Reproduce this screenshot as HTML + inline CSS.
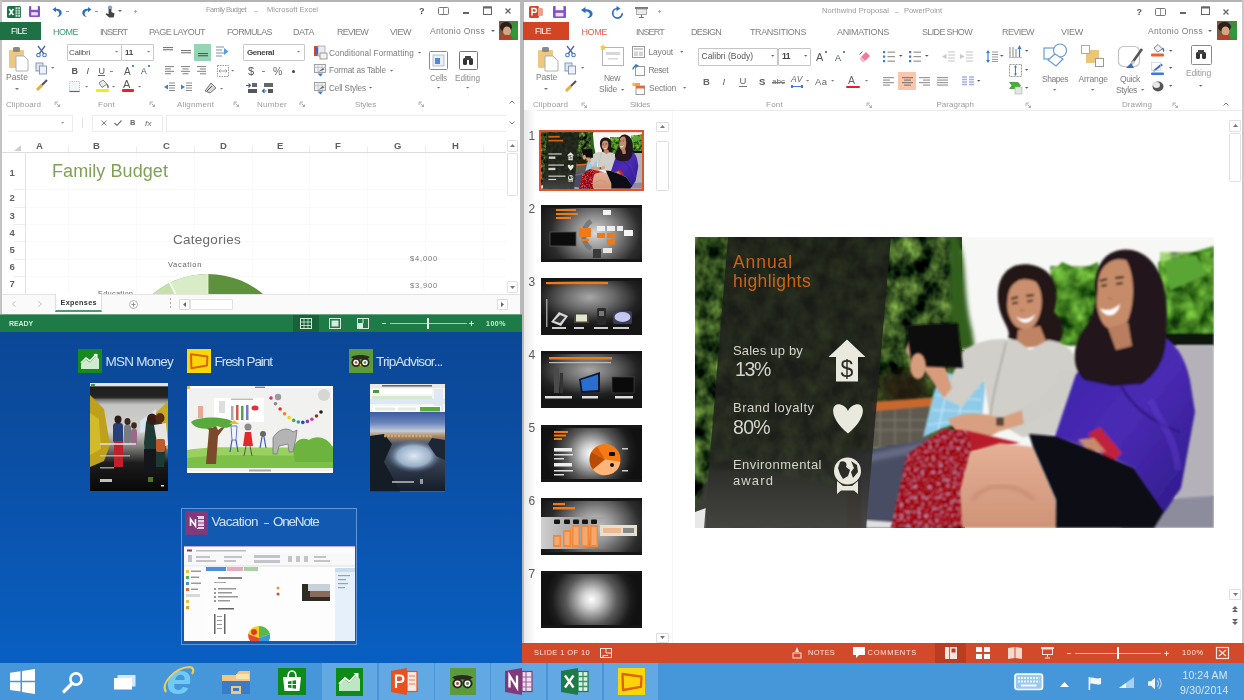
<!DOCTYPE html>
<html lang="en">
<head>
<meta charset="utf-8">
<title>Windows desktop - Excel and PowerPoint</title>
<style>
*{box-sizing:border-box;margin:0;padding:0}
html,body{width:1244px;height:700px;overflow:hidden}
body{position:relative;font-family:"Liberation Sans",sans-serif;font-size:8px;color:#555;
 background:linear-gradient(180deg,#0b4797 0%,#0b4797 48%,#0b4c9f 60%,#0a57b4 80%,#0862c6 100%)}
.a{position:absolute}
.t{position:absolute;white-space:nowrap;line-height:1.16;filter:blur(.45px)}
svg{overflow:visible}
</style>
</head>
<body>
<div id="stage" class="a" style="left:0;top:0;width:1244px;height:700px;overflow:hidden;filter:blur(.45px)">
<!-- EXCEL WINDOW -->
<div class="a" style="left:0;top:0;width:522px;height:332px;background:#fff"></div>
<div class="a" style="left:0px;top:0px;width:522px;height:2px;background:#b4b4b4;"></div>
<div class="a" style="left:0px;top:0px;width:2px;height:332px;background:#c4c4c4;"></div>
<div class="a" style="left:520px;top:0px;width:2px;height:332px;background:#b9b9b9;"></div>
<svg class="a" style="left:7px;top:6px;filter:blur(.4px)" width="14" height="12" viewBox="0 0 14 12"><rect x="0" y="0" width="14" height="12" rx="1.5" fill="#1e7145"/><rect x="8.5" y="1.2" width="4.6" height="9.6" fill="#cfe8d8"/><path d="M8.5 3.6H13M8.5 6H13M8.5 8.4H13M10.8 1.2V10.8" stroke="#1e7145" stroke-width=".7"/><path d="M2.2 3L6.4 9M6.4 3L2.2 9" stroke="#fff" stroke-width="1.5"/></svg>
<svg class="a" style="left:29px;top:6px;filter:blur(.4px)" width="11" height="11" viewBox="0 0 11 11"><rect width="11" height="11" rx="1" fill="#8452c6"/><rect x="2.2" y="0" width="6.6" height="3.8" fill="#fff"/><rect x="2.2" y="6.2" width="6.6" height="3.2" fill="#e9defa"/></svg>
<svg class="a" style="left:52px;top:7px;filter:blur(.4px)" width="11" height="10" viewBox="0 0 11 10"><path d="M0.5 2.5L4 0V1.8C8 1.6 10.5 4 9.5 7C8.8 9 7 9.8 5 9.8C7 8.6 7.8 7 7 5.4C6.3 4 5 3.6 4 3.6V5.2Z" fill="#2b6fc4"/></svg>
<div class="a" style="left:66px;top:11px;width:3px;height:1px;background:#999;"></div>
<svg class="a" style="left:81px;top:7px;filter:blur(.4px)" width="11" height="10" viewBox="0 0 11 10"><path d="M10.5 2.5L7 0V1.8C3 1.6 0.5 4 1.5 7C2.2 9 4 9.8 6 9.8C4 8.6 3.2 7 4 5.4C4.7 4 6 3.6 7 3.6V5.2Z" fill="#2b6fc4"/></svg>
<div class="a" style="left:95px;top:11px;width:3px;height:1px;background:#999;"></div>
<svg class="a" style="left:105px;top:5px;filter:blur(.4px)" width="10" height="13" viewBox="0 0 10 13"><circle cx="5" cy="2.6" r="2.2" fill="#8aa0c0"/><path d="M3.6 4V9L1.2 8.2L0.6 9.2L4.2 12.6H8.6L9.6 8.4L6.4 7V4Z" fill="#444"/></svg>
<svg class="a" style="left:118px;top:10px;filter:blur(.3px)" width="4" height="3" viewBox="0 0 4 3"><path d="M0 0H4L2 2Z" fill="#666"/></svg>
<div class="a" style="left:135px;top:10px;width:1px;height:3px;background:#aaa;"></div>
<div class="a" style="left:134px;top:11px;width:3px;height:1px;background:#aaa;"></div>
<span class="t" style="left:206px;top:6.1px;font-size:7.5px;color:#9a9a9a;letter-spacing:-0.61px;">Family Budget</span>
<span class="t" style="left:267px;top:6.1px;font-size:7.5px;color:#9a9a9a;letter-spacing:0.01px;">Microsoft Excel</span>
<div class="a" style="left:254px;top:11px;width:4px;height:1px;background:#c8c8c8;"></div>
<span class="t" style="left:419px;top:5.7px;font-size:9px;color:#555;letter-spacing:-0.50px;font-weight:700;">?</span>
<svg class="a" style="left:438px;top:7px;filter:blur(.3px)" width="11" height="8" viewBox="0 0 11 8"><rect x=".5" y=".5" width="10" height="7" rx="1" fill="none" stroke="#777" stroke-width="1"/><path d="M5.5 .5V7.5" stroke="#777" stroke-width=".8"/></svg>
<div class="a" style="left:463px;top:12px;width:6px;height:2px;background:#666;"></div>
<svg class="a" style="left:483px;top:6px;filter:blur(.3px)" width="9" height="9" viewBox="0 0 9 9"><rect x=".5" y="1" width="8" height="7.5" fill="none" stroke="#666" stroke-width="1"/><rect x=".5" y=".5" width="8" height="2" fill="#666"/></svg>
<svg class="a" style="left:505px;top:8px;filter:blur(.3px)" width="6" height="6" viewBox="0 0 6 6"><path d="M.5 .5L5.5 5.5M5.5 .5L.5 5.5" stroke="#666" stroke-width="1.3"/></svg>
<div class="a" style="left:0px;top:22px;width:41px;height:18px;background:#1e7145;"></div>
<span class="t" style="left:11px;top:27.1px;font-size:8.5px;color:#fff;letter-spacing:-0.49px;">FILE</span>
<span class="t" style="left:53px;top:26.7px;font-size:9px;color:#3d9a6e;letter-spacing:-0.50px;">HOME</span>
<span class="t" style="left:100px;top:26.7px;font-size:9px;color:#808080;letter-spacing:-0.97px;">INSERT</span>
<span class="t" style="left:149px;top:26.7px;font-size:9px;color:#808080;letter-spacing:-0.56px;">PAGE LAYOUT</span>
<span class="t" style="left:227px;top:26.7px;font-size:9px;color:#808080;letter-spacing:-0.63px;">FORMULAS</span>
<span class="t" style="left:293px;top:26.7px;font-size:9px;color:#808080;letter-spacing:-0.42px;">DATA</span>
<span class="t" style="left:337px;top:26.7px;font-size:9px;color:#808080;letter-spacing:-0.75px;">REVIEW</span>
<span class="t" style="left:390px;top:26.7px;font-size:9px;color:#808080;letter-spacing:-0.50px;">VIEW</span>
<span class="t" style="left:430px;top:27.1px;font-size:8.5px;color:#7c7c7c;letter-spacing:0.33px;">Antonio Onss</span>
<svg class="a" style="left:491px;top:30px;filter:blur(.3px)" width="4" height="3" viewBox="0 0 4 3"><path d="M0 0H4L2 2Z" fill="#666"/></svg>
<svg class="a" style="left:499px;top:21px;filter:blur(.6px)" width="19" height="19" viewBox="0 0 19 19"><rect width="19" height="19" fill="#3f8a3c"/><rect x="0" y="0" width="11" height="19" fill="#7a5a3a"/><ellipse cx="7" cy="6" rx="6" ry="5" fill="#2a2018"/><ellipse cx="8" cy="10" rx="4" ry="4.5" fill="#d8a486"/><path d="M0 19C1 14 5 13.5 8 14C12 14 13 16 14 19Z" fill="#b8402a"/><rect x="13" y="6" width="6" height="10" fill="#2f9a3a"/></svg>
<svg class="a" style="left:9px;top:47px;filter:blur(.45px)" width="19" height="24" viewBox="0 0 19 24"><rect x="0" y="3" width="15" height="18" rx="1" fill="#ecc880"/><rect x="4" y="0" width="7" height="5" rx="1.5" fill="#8a8a8a"/><path d="M7 9H15L19 13V24H7Z" fill="#fff" stroke="#a8a8a8" stroke-width=".9"/></svg>
<span class="t" style="left:6px;top:73.1px;font-size:8.5px;color:#787878;letter-spacing:0.05px;">Paste</span>
<svg class="a" style="left:14.5px;top:88px;filter:blur(.3px)" width="4" height="3" viewBox="0 0 4 3"><path d="M0 0H4L2 2Z" fill="#777"/></svg>
<svg class="a" style="left:36px;top:46px;filter:blur(.4px)" width="11" height="11" viewBox="0 0 11 11"><path d="M2 0L8 8M9 0L3 8" stroke="#4a6a9a" stroke-width="1.3"/><circle cx="2.5" cy="9" r="1.8" fill="none" stroke="#4a7ac0" stroke-width="1.1"/><circle cx="8.5" cy="9" r="1.8" fill="none" stroke="#4a7ac0" stroke-width="1.1"/></svg>
<svg class="a" style="left:36px;top:63px;filter:blur(.4px)" width="11" height="11" viewBox="0 0 11 11"><rect x="0" y="0" width="7" height="8" fill="#dfe6f0" stroke="#7c93b4" stroke-width=".9"/><rect x="3.5" y="3" width="7" height="8" fill="#eef2f8" stroke="#7c93b4" stroke-width=".9"/></svg>
<svg class="a" style="left:51.3px;top:67px;filter:blur(.3px)" width="3.4" height="2.7" viewBox="0 0 3.4 2.7"><path d="M0 0H3.4L1.7 1.7Z" fill="#777"/></svg>
<svg class="a" style="left:36px;top:80px;filter:blur(.4px)" width="12" height="11" viewBox="0 0 12 11"><path d="M1 10L6 5" stroke="#e2b23a" stroke-width="3"/><path d="M6 5L11 0" stroke="#555" stroke-width="2.2"/></svg>
<div class="a" style="left:67px;top:44px;width:55px;height:17px;background:#fff;border:1px solid #c9c9c9;border-radius:1px"></div>
<div class="a" style="left:121px;top:44px;width:33px;height:17px;background:#fff;border:1px solid #c9c9c9;border-radius:1px"></div>
<span class="t" style="left:69px;top:47.6px;font-size:8px;color:#555;letter-spacing:-0.24px;">Calibri</span>
<svg class="a" style="left:114.9px;top:51px;filter:blur(.3px)" width="3.2" height="2.6" viewBox="0 0 3.2 2.6"><path d="M0 0H3.2L1.6 1.6Z" fill="#777"/></svg>
<span class="t" style="left:125px;top:47.6px;font-size:8px;color:#444;letter-spacing:-0.23px;font-weight:700;">11</span>
<svg class="a" style="left:146.9px;top:51px;filter:blur(.3px)" width="3.2" height="2.6" viewBox="0 0 3.2 2.6"><path d="M0 0H3.2L1.6 1.6Z" fill="#777"/></svg>
<span class="t" style="left:71.5px;top:65.7px;font-size:9px;color:#555;letter-spacing:-1.00px;font-weight:700;">B</span>
<span class="t" style="left:86.5px;top:65.7px;font-size:9px;color:#555;letter-spacing:0.50px;font-style:italic;">I</span>
<span class="t" style="left:98.5px;top:65.7px;font-size:9px;color:#555;letter-spacing:0.00px;">U</span>
<div class="a" style="left:98px;top:75px;width:7px;height:1px;background:#666;"></div>
<div class="a" style="left:110px;top:71px;width:3px;height:1px;background:#888;"></div>
<span class="t" style="left:124px;top:65.8px;font-size:10px;color:#555;letter-spacing:1.33px;">A</span>
<div class="a" style="left:132px;top:65px;width:2px;height:2px;background:#4a8ad8;"></div>
<span class="t" style="left:141px;top:67.1px;font-size:8.5px;color:#555;letter-spacing:1.33px;">A</span>
<div class="a" style="left:148px;top:65px;width:2px;height:2px;background:#4a8ad8;"></div>
<svg class="a" style="left:69px;top:81px;filter:blur(.4px)" width="11" height="11" viewBox="0 0 11 11"><rect x=".5" y=".5" width="10" height="10" fill="#f4f6fa" stroke="#b9c2d0" stroke-width="1" stroke-dasharray="1.2 1"/><path d="M.5 10.5H10.5" stroke="#666" stroke-width="1.2"/></svg>
<svg class="a" style="left:84.9px;top:86px;filter:blur(.3px)" width="3.2" height="2.6" viewBox="0 0 3.2 2.6"><path d="M0 0H3.2L1.6 1.6Z" fill="#777"/></svg>
<svg class="a" style="left:96px;top:79px;filter:blur(.4px)" width="13" height="13" viewBox="0 0 13 13"><path d="M3 4L7 1L11 5L6 8.5Z" fill="#e8ecf2" stroke="#777" stroke-width=".9"/><path d="M11 5.5C12.5 7.5 12.5 8.5 11.5 9" stroke="#3a6ac0" stroke-width="1.3" fill="none"/><rect x="0" y="10" width="13" height="3" rx="1" fill="#f4ea1e"/></svg>
<svg class="a" style="left:111.9px;top:86px;filter:blur(.3px)" width="3.2" height="2.6" viewBox="0 0 3.2 2.6"><path d="M0 0H3.2L1.6 1.6Z" fill="#777"/></svg>
<span class="t" style="left:123px;top:77.8px;font-size:11px;color:#555;letter-spacing:2.66px;">A</span>
<div class="a" style="left:121.5px;top:89px;width:12px;height:3px;background:#e8202a;border-radius:1px;filter:blur(.4px)"></div>
<svg class="a" style="left:137.9px;top:86px;filter:blur(.3px)" width="3.2" height="2.6" viewBox="0 0 3.2 2.6"><path d="M0 0H3.2L1.6 1.6Z" fill="#777"/></svg>
<svg class="a" style="left:163px;top:47px;filter:blur(.35px)" width="12" height="10" viewBox="0 0 12 10"><rect x="0" y="0.0" width="10" height="1.1" fill="#777"/><rect x="0" y="2.2" width="10" height="1.1" fill="#777"/></svg>
<svg class="a" style="left:181px;top:50px;filter:blur(.35px)" width="12" height="10" viewBox="0 0 12 10"><rect x="0" y="0.0" width="10" height="1.1" fill="#777"/><rect x="0" y="2.2" width="10" height="1.1" fill="#777"/></svg>
<div class="a" style="left:194px;top:44px;width:17px;height:17px;background:#94d6b4;filter:blur(.3px)"></div>
<svg class="a" style="left:197.5px;top:53px;filter:blur(.35px)" width="12" height="10" viewBox="0 0 12 10"><rect x="0" y="0.0" width="10" height="1.1" fill="#555"/><rect x="0" y="2.2" width="10" height="1.1" fill="#555"/></svg>
<svg class="a" style="left:216px;top:46px;filter:blur(.4px)" width="13" height="11" viewBox="0 0 13 11"><path d="M0 1H8M0 4H6M0 7H8M0 10H6" stroke="#7a90b0" stroke-width="1"/><path d="M8 2L12.5 5.5L8 9Z" fill="#5a9ae0"/></svg>
<svg class="a" style="left:165px;top:66px;filter:blur(.35px)" width="12" height="10" viewBox="0 0 12 10"><rect x="0" y="0.0" width="9" height="1.1" fill="#8a8a8a"/><rect x="0" y="2.4" width="6" height="1.1" fill="#8a8a8a"/><rect x="0" y="4.8" width="9" height="1.1" fill="#8a8a8a"/><rect x="0" y="7.199999999999999" width="6" height="1.1" fill="#8a8a8a"/></svg>
<svg class="a" style="left:181px;top:66px;filter:blur(.35px)" width="12" height="10" viewBox="0 0 12 10"><rect x="0" y="0.0" width="9" height="1.1" fill="#8a8a8a"/><rect x="1.5" y="2.4" width="6" height="1.1" fill="#8a8a8a"/><rect x="0" y="4.8" width="9" height="1.1" fill="#8a8a8a"/><rect x="1.5" y="7.199999999999999" width="6" height="1.1" fill="#8a8a8a"/></svg>
<svg class="a" style="left:197px;top:66px;filter:blur(.35px)" width="12" height="10" viewBox="0 0 12 10"><rect x="0" y="0.0" width="9" height="1.1" fill="#8a8a8a"/><rect x="3" y="2.4" width="6" height="1.1" fill="#8a8a8a"/><rect x="0" y="4.8" width="9" height="1.1" fill="#8a8a8a"/><rect x="3" y="7.199999999999999" width="6" height="1.1" fill="#8a8a8a"/></svg>
<svg class="a" style="left:217px;top:65px;filter:blur(.4px)" width="12" height="12" viewBox="0 0 12 12"><rect x=".5" y=".5" width="11" height="11" fill="#fff" stroke="#999" stroke-width="1" stroke-dasharray="1.5 1"/><path d="M2 6H10M3.5 4.5L2 6L3.5 7.5M8.500 4.5L10 6L8.5 7.500" stroke="#888" stroke-width=".8" fill="none"/></svg>
<svg class="a" style="left:231.4px;top:70px;filter:blur(.3px)" width="3.2" height="2.6" viewBox="0 0 3.2 2.6"><path d="M0 0H3.2L1.6 1.6Z" fill="#777"/></svg>
<svg class="a" style="left:164px;top:83px;filter:blur(.4px)" width="12" height="10" viewBox="0 0 12 10"><path d="M5 0H11M5 2.5H11M5 5H11M5 7.5H11" stroke="#8a8a8a" stroke-width="1"/><path d="M4 1.500L0 4L4 6.500Z" fill="#3f7fd0"/></svg>
<svg class="a" style="left:181px;top:83px;filter:blur(.4px)" width="12" height="10" viewBox="0 0 12 10"><path d="M5 0H11M5 2.5H11M5 5H11M5 7.5H11" stroke="#8a8a8a" stroke-width="1"/><path d="M0 1.500L4 4L0 6.500Z" fill="#3f7fd0"/></svg>
<svg class="a" style="left:204px;top:82px;filter:blur(.45px)" width="13" height="12" viewBox="0 0 13 12"><path d="M1 9L7 1L12 6L6 11Z" fill="#d8d8d8" stroke="#777" stroke-width="1"/><path d="M3 9L8 4" stroke="#555" stroke-width="1"/></svg>
<svg class="a" style="left:219.9px;top:88px;filter:blur(.3px)" width="3.2" height="2.6" viewBox="0 0 3.2 2.6"><path d="M0 0H3.2L1.6 1.6Z" fill="#777"/></svg>
<div class="a" style="left:243px;top:44px;width:62px;height:17px;background:#fff;border:1px solid #c9c9c9;border-radius:1px"></div>
<span class="t" style="left:247px;top:47.6px;font-size:8px;color:#444;letter-spacing:-0.40px;font-weight:700;">General</span>
<svg class="a" style="left:296.9px;top:51px;filter:blur(.3px)" width="3.2" height="2.6" viewBox="0 0 3.2 2.6"><path d="M0 0H3.2L1.6 1.6Z" fill="#777"/></svg>
<span class="t" style="left:248px;top:64.8px;font-size:11px;color:#555;letter-spacing:0.88px;">$</span>
<div class="a" style="left:262px;top:71px;width:3px;height:1px;background:#888;"></div>
<span class="t" style="left:273px;top:65.3px;font-size:10.5px;color:#666;letter-spacing:0.66px;">%</span>
<div class="a" style="left:292px;top:70px;width:3px;height:3px;background:#444;border-radius:2px"></div>
<svg class="a" style="left:246px;top:83px;filter:blur(.5px)" width="12" height="11" viewBox="0 0 12 11"><path d="M0 2.500H4M2.500 .5L4.500 2.500L2.500 4.500" stroke="#2a5fc0" stroke-width="1.1" fill="none"/><rect x="6" y="0" width="5" height="4" fill="#666"/><rect x="2" y="6" width="9" height="4" fill="#555"/></svg>
<svg class="a" style="left:262px;top:83px;filter:blur(.5px)" width="12" height="11" viewBox="0 0 12 11"><rect x="2" y="0" width="9" height="4" fill="#666"/><path d="M4.500 8H0.500M2.500 6L0.500 8L2.500 10" stroke="#2a5fc0" stroke-width="1.1" fill="none"/><rect x="6" y="6" width="5" height="4" fill="#555"/></svg>
<svg class="a" style="left:314px;top:46px;filter:blur(.45px)" width="13" height="13" viewBox="0 0 13 13"><rect x="0" y="0" width="4" height="10" fill="#d8452a"/><rect x="4" y="0" width="7" height="10" fill="#e8ecf2" stroke="#9aa" stroke-width=".8"/><rect x="1" y="2" width="3" height="6" fill="#3a6ac8"/><rect x="6" y="7" width="7" height="6" fill="#f2f2f2" stroke="#888" stroke-width=".8"/></svg>
<svg class="a" style="left:314px;top:64px;filter:blur(.45px)" width="13" height="13" viewBox="0 0 13 13"><rect x=".5" y=".5" width="11" height="8" fill="#eef0f4" stroke="#999" stroke-width=".9"/><path d="M.5 3.500H11.500M4 .5V8.500M8 .5V8.500" stroke="#b8bcc4" stroke-width=".7"/><path d="M4 8L9 4L10.500 5.500Z" fill="#666"/><path d="M3.500 9.500L6.500 12.500L9 9.500Z" fill="#2f7ad8"/></svg>
<svg class="a" style="left:314px;top:82px;filter:blur(.45px)" width="13" height="13" viewBox="0 0 13 13"><rect x=".5" y=".5" width="11" height="8" fill="#eef0f4" stroke="#999" stroke-width=".9"/><path d="M.5 3.500H11.500M4 .5V8.500M8 .5V8.500" stroke="#b8bcc4" stroke-width=".7"/><path d="M4 8L9 4L10.500 5.500Z" fill="#666"/><path d="M3.500 9.500L6.500 12.500L9 9.500Z" fill="#2f7ad8"/></svg>
<span class="t" style="left:329px;top:49.4px;font-size:8.2px;color:#7c7c7c;letter-spacing:0.11px;">Conditional Formatting</span>
<svg class="a" style="left:417.9px;top:52px;filter:blur(.3px)" width="3.2" height="2.6" viewBox="0 0 3.2 2.6"><path d="M0 0H3.2L1.6 1.6Z" fill="#666"/></svg>
<span class="t" style="left:329px;top:66.4px;font-size:8.2px;color:#7c7c7c;letter-spacing:-0.11px;">Format as Table</span>
<svg class="a" style="left:389.9px;top:70px;filter:blur(.3px)" width="3.2" height="2.6" viewBox="0 0 3.2 2.6"><path d="M0 0H3.2L1.6 1.6Z" fill="#666"/></svg>
<span class="t" style="left:329px;top:84.4px;font-size:8.2px;color:#7c7c7c;letter-spacing:-0.16px;">Cell Styles</span>
<svg class="a" style="left:368.9px;top:87px;filter:blur(.3px)" width="3.2" height="2.6" viewBox="0 0 3.2 2.6"><path d="M0 0H3.2L1.6 1.6Z" fill="#666"/></svg>
<div class="a" style="left:429px;top:51px;width:19px;height:19px;background:#fff;border:1px solid #8a8a8a;border-radius:1.5px;filter:blur(.3px)"></div>
<svg class="a" style="left:433px;top:55px;filter:blur(.5px)" width="11" height="11" viewBox="0 0 11 11"><rect x="0" y="0" width="11" height="11" fill="#eaf0f8" stroke="#9ab" stroke-width=".7"/><rect x="2" y="3" width="5" height="6" fill="#4a8ad8"/></svg>
<div class="a" style="left:458.5px;top:51px;width:19.5px;height:19px;background:#fff;border:1px solid #777;border-radius:1.5px;filter:blur(.3px)"></div>
<svg class="a" style="left:463px;top:56px;filter:blur(.45px)" width="10" height="9" viewBox="0 0 10 9"><rect x="0" y="2" width="4" height="7" rx="1.5" fill="#333"/><rect x="6" y="2" width="4" height="7" rx="1.5" fill="#333"/><rect x="2" y="0" width="6" height="4" fill="#444"/></svg>
<span class="t" style="left:430px;top:74.4px;font-size:8.2px;color:#8a8a8a;letter-spacing:-0.25px;">Cells</span>
<svg class="a" style="left:436.9px;top:87px;filter:blur(.3px)" width="3.2" height="2.6" viewBox="0 0 3.2 2.6"><path d="M0 0H3.2L1.6 1.6Z" fill="#666"/></svg>
<span class="t" style="left:455px;top:74.4px;font-size:8.2px;color:#8a8a8a;letter-spacing:-0.01px;">Editing</span>
<svg class="a" style="left:465.9px;top:87px;filter:blur(.3px)" width="3.2" height="2.6" viewBox="0 0 3.2 2.6"><path d="M0 0H3.2L1.6 1.6Z" fill="#666"/></svg>
<span class="t" style="left:6px;top:99.6px;font-size:8px;color:#9c9c9c;letter-spacing:0.08px;">Clipboard</span>
<svg class="a" style="left:55px;top:102px;filter:blur(.3px)" width="5" height="5" viewBox="0 0 5 5"><path d="M0 0H3M0 0V3M1.5 1.5L4.5 4.5M4.5 2.5V4.5H2.5" stroke="#999" stroke-width=".8" fill="none"/></svg>
<span class="t" style="left:98px;top:99.6px;font-size:8px;color:#9c9c9c;letter-spacing:0.25px;">Font</span>
<svg class="a" style="left:150px;top:102px;filter:blur(.3px)" width="5" height="5" viewBox="0 0 5 5"><path d="M0 0H3M0 0V3M1.5 1.5L4.5 4.5M4.5 2.5V4.5H2.5" stroke="#999" stroke-width=".8" fill="none"/></svg>
<span class="t" style="left:177px;top:99.6px;font-size:8px;color:#9c9c9c;letter-spacing:0.16px;">Alignment</span>
<svg class="a" style="left:234px;top:102px;filter:blur(.3px)" width="5" height="5" viewBox="0 0 5 5"><path d="M0 0H3M0 0V3M1.5 1.5L4.5 4.5M4.5 2.5V4.5H2.5" stroke="#999" stroke-width=".8" fill="none"/></svg>
<span class="t" style="left:257px;top:99.6px;font-size:8px;color:#9c9c9c;letter-spacing:0.26px;">Number</span>
<svg class="a" style="left:300px;top:102px;filter:blur(.3px)" width="5" height="5" viewBox="0 0 5 5"><path d="M0 0H3M0 0V3M1.5 1.5L4.5 4.5M4.5 2.5V4.5H2.5" stroke="#999" stroke-width=".8" fill="none"/></svg>
<span class="t" style="left:355px;top:99.6px;font-size:8px;color:#9c9c9c;letter-spacing:-0.13px;">Styles</span>
<svg class="a" style="left:419px;top:102px;filter:blur(.3px)" width="5" height="5" viewBox="0 0 5 5"><path d="M0 0H3M0 0V3M1.5 1.5L4.5 4.5M4.5 2.5V4.5H2.5" stroke="#999" stroke-width=".8" fill="none"/></svg>
<svg class="a" style="left:509px;top:100px;filter:blur(.3px)" width="6" height="4" viewBox="0 0 6 4"><path d="M.5 3.500L3 1L5.500 3.500" stroke="#777" stroke-width="1" fill="none"/></svg>
<div class="a" style="left:8px;top:115px;width:65px;height:17px;background:#fff;border:1px solid #ececec;border-left:none"></div>
<div class="a" style="left:92px;top:115px;width:71px;height:17px;background:#fff;border:1px solid #ececec"></div>
<div class="a" style="left:166px;top:115px;width:340px;height:17px;background:#fff;border:1px solid #ececec;border-right:none"></div>
<svg class="a" style="left:60.9px;top:122px;filter:blur(.3px)" width="3.2" height="2.6" viewBox="0 0 3.2 2.6"><path d="M0 0H3.2L1.6 1.6Z" fill="#888"/></svg>
<div class="a" style="left:82px;top:118px;width:1px;height:10px;background:#e4e4e4;"></div>
<svg class="a" style="left:101px;top:120px;filter:blur(.3px)" width="6" height="6" viewBox="0 0 6 6"><path d="M.5 .5L5.500 5.500M5.500 .5L.5 5.500" stroke="#8a8a8a" stroke-width="1"/></svg>
<svg class="a" style="left:114px;top:120px;filter:blur(.3px)" width="8" height="6" viewBox="0 0 8 6"><path d="M.5 3L3 5.500L7.500 .5" stroke="#777" stroke-width="1.2" fill="none"/></svg>
<span class="t" style="left:130px;top:119.1px;font-size:7.5px;color:#666;letter-spacing:-0.42px;font-weight:700;">B</span>
<span class="t" style="left:145px;top:118.6px;font-size:8px;color:#666;letter-spacing:0.39px;font-style:italic;">fx</span>
<svg class="a" style="left:509px;top:121px;filter:blur(.3px)" width="6" height="4" viewBox="0 0 6 4"><path d="M.5 .5L3 3L5.500 .5" stroke="#888" stroke-width="1" fill="none"/></svg>
<div class="a" style="left:2px;top:152px;width:504px;height:1px;background:#dcdcdc;"></div>
<div class="a" style="left:25px;top:152px;width:1px;height:142px;background:#e2e2e2;"></div>
<svg class="a" style="left:14px;top:145px;filter:blur(.3px)" width="7" height="6" viewBox="0 0 7 6"><path d="M7 0V6H0Z" fill="#cfcfcf"/></svg>
<span class="t" style="left:36px;top:140.2px;font-size:9.5px;color:#606060;letter-spacing:-0.86px;font-weight:700;filter:blur(0.5px);">A</span>
<span class="t" style="left:93px;top:140.2px;font-size:9.5px;color:#606060;letter-spacing:-0.86px;font-weight:700;filter:blur(0.5px);">B</span>
<span class="t" style="left:163px;top:140.2px;font-size:9.5px;color:#606060;letter-spacing:-0.86px;font-weight:700;filter:blur(0.5px);">C</span>
<span class="t" style="left:220px;top:140.2px;font-size:9.5px;color:#606060;letter-spacing:-0.86px;font-weight:700;filter:blur(0.5px);">D</span>
<span class="t" style="left:277px;top:140.2px;font-size:9.5px;color:#606060;letter-spacing:-0.34px;font-weight:700;filter:blur(0.5px);">E</span>
<span class="t" style="left:335px;top:140.2px;font-size:9.5px;color:#606060;letter-spacing:0.20px;font-weight:700;filter:blur(0.5px);">F</span>
<span class="t" style="left:394px;top:140.2px;font-size:9.5px;color:#606060;letter-spacing:-1.39px;font-weight:700;filter:blur(0.5px);">G</span>
<span class="t" style="left:452px;top:140.2px;font-size:9.5px;color:#606060;letter-spacing:-0.86px;font-weight:700;filter:blur(0.5px);">H</span>
<span class="t" style="left:9.5px;top:167.2px;font-size:9.5px;color:#606060;letter-spacing:-0.28px;font-weight:700;filter:blur(0.5px);">1</span>
<span class="t" style="left:9.5px;top:192.2px;font-size:9.5px;color:#606060;letter-spacing:-0.28px;font-weight:700;filter:blur(0.5px);">2</span>
<span class="t" style="left:9.5px;top:210.2px;font-size:9.5px;color:#606060;letter-spacing:-0.28px;font-weight:700;filter:blur(0.5px);">3</span>
<span class="t" style="left:9.5px;top:227.2px;font-size:9.5px;color:#606060;letter-spacing:-0.28px;font-weight:700;filter:blur(0.5px);">4</span>
<span class="t" style="left:9.5px;top:244.2px;font-size:9.5px;color:#606060;letter-spacing:-0.28px;font-weight:700;filter:blur(0.5px);">5</span>
<span class="t" style="left:9.5px;top:261.2px;font-size:9.5px;color:#606060;letter-spacing:-0.28px;font-weight:700;filter:blur(0.5px);">6</span>
<span class="t" style="left:9.5px;top:278.2px;font-size:9.5px;color:#606060;letter-spacing:-0.28px;font-weight:700;filter:blur(0.5px);">7</span>
<div class="a" style="left:68px;top:146px;width:1px;height:6px;background:#ededed;"></div>
<div class="a" style="left:68px;top:153px;width:1px;height:140px;background:#f9f9f9;"></div>
<div class="a" style="left:136px;top:146px;width:1px;height:6px;background:#ededed;"></div>
<div class="a" style="left:136px;top:153px;width:1px;height:140px;background:#f9f9f9;"></div>
<div class="a" style="left:194px;top:146px;width:1px;height:6px;background:#ededed;"></div>
<div class="a" style="left:194px;top:153px;width:1px;height:140px;background:#f9f9f9;"></div>
<div class="a" style="left:252px;top:146px;width:1px;height:6px;background:#ededed;"></div>
<div class="a" style="left:252px;top:153px;width:1px;height:140px;background:#f9f9f9;"></div>
<div class="a" style="left:309px;top:146px;width:1px;height:6px;background:#ededed;"></div>
<div class="a" style="left:309px;top:153px;width:1px;height:140px;background:#f9f9f9;"></div>
<div class="a" style="left:367px;top:146px;width:1px;height:6px;background:#ededed;"></div>
<div class="a" style="left:367px;top:153px;width:1px;height:140px;background:#f9f9f9;"></div>
<div class="a" style="left:425px;top:146px;width:1px;height:6px;background:#ededed;"></div>
<div class="a" style="left:425px;top:153px;width:1px;height:140px;background:#f9f9f9;"></div>
<div class="a" style="left:483px;top:146px;width:1px;height:6px;background:#ededed;"></div>
<div class="a" style="left:483px;top:153px;width:1px;height:140px;background:#f9f9f9;"></div>
<div class="a" style="left:14px;top:189px;width:11px;height:1px;background:#ededed;"></div>
<div class="a" style="left:26px;top:189px;width:480px;height:1px;background:#f9f9f9;"></div>
<div class="a" style="left:14px;top:207px;width:11px;height:1px;background:#ededed;"></div>
<div class="a" style="left:26px;top:207px;width:480px;height:1px;background:#f9f9f9;"></div>
<div class="a" style="left:14px;top:224px;width:11px;height:1px;background:#ededed;"></div>
<div class="a" style="left:26px;top:224px;width:480px;height:1px;background:#f9f9f9;"></div>
<div class="a" style="left:14px;top:241px;width:11px;height:1px;background:#ededed;"></div>
<div class="a" style="left:26px;top:241px;width:480px;height:1px;background:#f9f9f9;"></div>
<div class="a" style="left:14px;top:259px;width:11px;height:1px;background:#ededed;"></div>
<div class="a" style="left:26px;top:259px;width:480px;height:1px;background:#f9f9f9;"></div>
<div class="a" style="left:14px;top:276px;width:11px;height:1px;background:#ededed;"></div>
<div class="a" style="left:26px;top:276px;width:480px;height:1px;background:#f9f9f9;"></div>
<span class="t" style="left:52px;top:161.3px;font-size:18px;color:#7ea155;letter-spacing:0.07px;filter:blur(0.55px);">Family Budget</span>
<span class="t" style="left:173px;top:231.5px;font-size:13.5px;color:#6a6a6a;letter-spacing:0.27px;filter:blur(0.5px);">Categories</span>
<span class="t" style="left:168px;top:261.1px;font-size:7.5px;color:#666;letter-spacing:0.67px;">Vacation</span>
<span class="t" style="left:410px;top:255.1px;font-size:7.5px;color:#777;letter-spacing:0.84px;">$4,000</span>
<span class="t" style="left:410px;top:282.1px;font-size:7.5px;color:#777;letter-spacing:0.84px;">$3,900</span>
<div class="a" style="left:26px;top:255px;width:480px;height:39px;overflow:hidden"><span class="t" style="left:72px;top:34.500px;font-size:7.500px;color:#666;letter-spacing:0.2px">Education</span><svg class="a" style="left:96px;top:18px;filter:blur(.5px)" width="180" height="180" viewBox="0 0 180 180"><circle cx="86" cy="87" r="86" fill="#5d913c"/><path d="M86 87V1A86 86 0 0 0 48 9.800Z" fill="#d9ecc8"/><path d="M86 87L48 9.800A86 86 0 0 0 0 87Z" fill="#c6e0ad"/><path d="M86 87L46.500 7" stroke="#fff" stroke-width="1.6"/><path d="M86 87V0" stroke="#eef6e6" stroke-width=".8"/></svg></div>
<div class="a" style="left:506px;top:138px;width:14px;height:156px;background:#fff;"></div>
<div class="a" style="left:507px;top:140px;width:11px;height:12px;background:#fff;border:1px solid #e2e2e2;border-radius:1px"></div>
<svg class="a" style="left:510px;top:144px;filter:blur(.3px)" width="5" height="3" viewBox="0 0 5 3"><path d="M0 3H5L2.500 0Z" fill="#777"/></svg>
<div class="a" style="left:507px;top:153px;width:11px;height:43px;background:#fff;border:1px solid #e2e2e2;border-radius:1px"></div>
<div class="a" style="left:507px;top:281px;width:11px;height:12px;background:#fff;border:1px solid #e2e2e2;border-radius:1px"></div>
<svg class="a" style="left:510px;top:286px;filter:blur(.3px)" width="5" height="3" viewBox="0 0 5 3"><path d="M0 0H5L2.500 3Z" fill="#777"/></svg>
<div class="a" style="left:2px;top:294px;width:518px;height:21px;background:#fafafa;"></div>
<div class="a" style="left:2px;top:294px;width:518px;height:1px;background:#e4e4e4;"></div>
<svg class="a" style="left:12px;top:301px;" width="4" height="6" viewBox="0 0 4 6"><path d="M3.500 .5L.5 3L3.500 5.500" stroke="#c4c4c4" stroke-width="1" fill="none"/></svg>
<svg class="a" style="left:38px;top:301px;" width="4" height="6" viewBox="0 0 4 6"><path d="M.5 .5L3.500 3L.5 5.500" stroke="#c4c4c4" stroke-width="1" fill="none"/></svg>
<div class="a" style="left:55px;top:294px;width:47px;height:18px;background:#fff;border-bottom:2px solid #4e9a72;border-left:1px solid #e0e0e0;border-right:1px solid #e0e0e0"></div>
<span class="t" style="left:60.5px;top:299.3px;font-size:7.2px;color:#333;letter-spacing:0.36px;font-weight:700;">Expenses</span>
<svg class="a" style="left:128.5px;top:299.5px;filter:blur(.3px)" width="9" height="9" viewBox="0 0 9 9"><circle cx="4.500" cy="4.500" r="4" fill="#fff" stroke="#aaa" stroke-width=".9"/><path d="M2.500 4.500H6.500M4.500 2.500V6.500" stroke="#888" stroke-width=".9"/></svg>
<div class="a" style="left:170px;top:298px;width:1px;height:2px;background:#aaa;"></div>
<div class="a" style="left:170px;top:302px;width:1px;height:2px;background:#aaa;"></div>
<div class="a" style="left:170px;top:306px;width:1px;height:2px;background:#aaa;"></div>
<div class="a" style="left:179px;top:299px;width:11px;height:11px;background:#fff;border:1px solid #dcdcdc;border-radius:1px"></div>
<svg class="a" style="left:183px;top:302px;" width="3" height="5" viewBox="0 0 3 5"><path d="M3 0V5L0 2.500Z" fill="#666"/></svg>
<div class="a" style="left:190px;top:299px;width:43px;height:11px;background:#fff;border:1px solid #e2e2e2;border-radius:1px"></div>
<div class="a" style="left:497px;top:299px;width:11px;height:11px;background:#fff;border:1px solid #dcdcdc;border-radius:1px"></div>
<svg class="a" style="left:501px;top:302px;" width="3" height="5" viewBox="0 0 3 5"><path d="M0 0V5L3 2.500Z" fill="#666"/></svg>
<div class="a" style="left:0px;top:315px;width:522px;height:17px;background:#1e7a46;"></div>
<div class="a" style="left:0px;top:314px;width:522px;height:1px;background:#6aa684;"></div>
<span class="t" style="left:9px;top:319.5px;font-size:7px;color:#cfe8da;letter-spacing:-0.10px;font-weight:700;">READY</span>
<div class="a" style="left:293px;top:315px;width:26px;height:17px;background:#176238;"></div>
<svg class="a" style="left:300px;top:318px;filter:blur(.35px)" width="12" height="11" viewBox="0 0 12 11"><rect x=".5" y=".5" width="11" height="10" fill="none" stroke="#d6eadf" stroke-width="1"/><path d="M.5 4H11.500M.5 7.500H11.500M4 .5V10.500M8 .5V10.500" stroke="#d6eadf" stroke-width=".8"/></svg>
<svg class="a" style="left:329px;top:318px;filter:blur(.35px)" width="12" height="11" viewBox="0 0 12 11"><rect x=".5" y=".5" width="11" height="10" fill="none" stroke="#d6eadf" stroke-width="1"/><rect x="2.500" y="2.500" width="7" height="6" fill="#d6eadf"/></svg>
<svg class="a" style="left:357px;top:318px;filter:blur(.35px)" width="12" height="11" viewBox="0 0 12 11"><rect x=".5" y=".5" width="11" height="10" fill="none" stroke="#d6eadf" stroke-width="1"/><path d="M.5 5.500H6V.5" stroke="#d6eadf" stroke-width="1" fill="none"/><rect x="1" y="6" width="5" height="4" fill="#d6eadf"/></svg>
<div class="a" style="left:382px;top:323px;width:4px;height:1px;background:#d6eadf;"></div>
<div class="a" style="left:390px;top:323px;width:77px;height:1px;background:#a9cdb9;"></div>
<div class="a" style="left:427px;top:318px;width:2px;height:11px;background:#e6f2ec;"></div>
<div class="a" style="left:469px;top:323px;width:5px;height:1px;background:#d6eadf;"></div>
<div class="a" style="left:471px;top:321px;width:1px;height:5px;background:#d6eadf;"></div>
<span class="t" style="left:486px;top:319.5px;font-size:7px;color:#cfe8da;letter-spacing:0.52px;font-weight:700;">100%</span>
<!-- POWERPOINT WINDOW -->
<div class="a" style="left:522px;top:0;width:722px;height:663px;background:#fff"></div>
<div class="a" style="left:522px;top:0px;width:722px;height:2px;background:#b4b4b4;"></div>
<div class="a" style="left:522px;top:0px;width:2px;height:663px;background:#b8b8b8;"></div>
<div class="a" style="left:1242px;top:0px;width:2px;height:663px;background:#c9c9c9;"></div>
<svg class="a" style="left:529px;top:6px;filter:blur(.45px)" width="14" height="12" viewBox="0 0 14 12"><rect x="0" y="0" width="10" height="12" rx="1.5" fill="#d24726"/><path d="M9 2H12.500A1.500 1.500 0 0 1 14 3.500V8.500A1.500 1.500 0 0 1 12.500 10H9Z" fill="#f0a08a"/><path d="M3 9.500V2.500H5.500C8 2.500 8 6.300 5.500 6.300H3" stroke="#fff" stroke-width="1.400" fill="none"/></svg>
<svg class="a" style="left:553px;top:6px;filter:blur(.45px)" width="13" height="12" viewBox="0 0 13 12"><rect width="13" height="12" rx="1" fill="#8452c6"/><rect x="2.600" y="0" width="7.800" height="4.200" fill="#fff"/><rect x="2.600" y="6.800" width="7.800" height="3.600" fill="#e9defa"/></svg>
<svg class="a" style="left:581px;top:7px;filter:blur(.45px)" width="13" height="11" viewBox="0 0 13 11"><path d="M0 3L4.500 0V2.200C9.500 2 12.500 5 11.300 8.200C10.500 10.200 8.500 11 6 11C8.500 9.600 9.300 7.800 8.500 6.200C7.700 4.800 6 4.400 4.500 4.400V6.200Z" fill="#2b6fc4"/></svg>
<svg class="a" style="left:611px;top:6px;filter:blur(.45px)" width="13" height="13" viewBox="0 0 13 13"><path d="M6.500 2.500A4.800 4.800 0 1 0 11.300 7.300" stroke="#2b6fc4" stroke-width="1.700" fill="none"/><path d="M5.500 0L9.500 2.500L5.500 5.200Z" fill="#2b6fc4"/></svg>
<svg class="a" style="left:635px;top:7px;filter:blur(.45px)" width="13" height="11" viewBox="0 0 13 11"><rect x="0" y="0" width="13" height="2" fill="#777"/><rect x="1.500" y="2" width="10" height="5.500" fill="#e8ece8" stroke="#999" stroke-width=".8"/><path d="M6.500 7.500V10M4 10.500H9" stroke="#777" stroke-width="1"/></svg>
<div class="a" style="left:659px;top:10px;width:1px;height:3px;background:#aaa;"></div>
<div class="a" style="left:658px;top:11px;width:3px;height:1px;background:#aaa;"></div>
<span class="t" style="left:822px;top:7.1px;font-size:7.5px;color:#9a9a9a;letter-spacing:0.09px;">Northwind Proposal</span>
<div class="a" style="left:895px;top:11.5px;width:4px;height:1px;background:#c8c8c8;"></div>
<span class="t" style="left:904px;top:7.1px;font-size:7.5px;color:#9a9a9a;letter-spacing:-0.04px;">PowerPoint</span>
<span class="t" style="left:1136.5px;top:6.7px;font-size:9px;color:#555;letter-spacing:-0.50px;font-weight:700;">?</span>
<svg class="a" style="left:1155px;top:8px;filter:blur(.3px)" width="11" height="8" viewBox="0 0 11 8"><rect x=".5" y=".5" width="10" height="7" rx="1" fill="none" stroke="#777" stroke-width="1"/><path d="M5.500 .5V7.500" stroke="#777" stroke-width=".8"/></svg>
<div class="a" style="left:1180px;top:12px;width:6px;height:2px;background:#666;"></div>
<svg class="a" style="left:1201px;top:6px;filter:blur(.3px)" width="9" height="9" viewBox="0 0 9 9"><rect x=".5" y="1" width="8" height="7.500" fill="none" stroke="#666" stroke-width="1"/><rect x=".5" y=".5" width="8" height="2" fill="#666"/></svg>
<svg class="a" style="left:1223px;top:8.5px;filter:blur(.3px)" width="6" height="6" viewBox="0 0 6 6"><path d="M.5 .5L5.500 5.500M5.500 .5L.5 5.500" stroke="#666" stroke-width="1.300"/></svg>
<div class="a" style="left:523px;top:22px;width:46px;height:18px;background:#d14524;"></div>
<span class="t" style="left:535px;top:27.1px;font-size:8.5px;color:#fff;letter-spacing:-0.49px;">FILE</span>
<span class="t" style="left:581.5px;top:26.7px;font-size:9px;color:#e4604a;letter-spacing:-0.38px;">HOME</span>
<span class="t" style="left:636px;top:26.7px;font-size:9px;color:#808080;letter-spacing:-0.81px;">INSERT</span>
<span class="t" style="left:691px;top:26.7px;font-size:9px;color:#808080;letter-spacing:-0.75px;">DESIGN</span>
<span class="t" style="left:750px;top:26.7px;font-size:9px;color:#808080;letter-spacing:-0.41px;">TRANSITIONS</span>
<span class="t" style="left:837px;top:26.7px;font-size:9px;color:#808080;letter-spacing:-0.33px;">ANIMATIONS</span>
<span class="t" style="left:922px;top:26.7px;font-size:9px;color:#808080;letter-spacing:-0.65px;">SLIDE SHOW</span>
<span class="t" style="left:1002px;top:26.7px;font-size:9px;color:#808080;letter-spacing:-0.58px;">REVIEW</span>
<span class="t" style="left:1061px;top:26.7px;font-size:9px;color:#808080;letter-spacing:-0.25px;">VIEW</span>
<span class="t" style="left:1148px;top:27.1px;font-size:8.5px;color:#7c7c7c;letter-spacing:0.33px;">Antonio Onss</span>
<svg class="a" style="left:1208px;top:30px;filter:blur(.3px)" width="4" height="3" viewBox="0 0 4 3"><path d="M0 0H4L2 2Z" fill="#666"/></svg>
<svg class="a" style="left:1217px;top:21px;filter:blur(.6px)" width="20" height="19" viewBox="0 0 20 19"><rect width="20" height="19" fill="#3f8a3c"/><rect x="0" y="0" width="12" height="19" fill="#7a5a3a"/><ellipse cx="7.500" cy="6" rx="6.500" ry="5" fill="#2a2018"/><ellipse cx="8.500" cy="10" rx="4" ry="4.500" fill="#d8a486"/><path d="M0 19C1 14 5 13.500 8 14C12 14 13 16 14 19Z" fill="#b8402a"/><rect x="14" y="6" width="6" height="10" fill="#2f9a3a"/></svg>
<svg class="a" style="left:537.5px;top:47px;filter:blur(.45px)" width="20" height="24" viewBox="0 0 20 24"><rect x="0" y="3" width="15" height="18" rx="1" fill="#ecc880"/><rect x="4" y="0" width="7" height="5" rx="1.500" fill="#8a8a8a"/><path d="M7 9H15L20 14V24H7Z" fill="#fff" stroke="#a8a8a8" stroke-width=".9"/></svg>
<span class="t" style="left:536px;top:73.1px;font-size:8.5px;color:#7c7c7c;letter-spacing:-0.15px;">Paste</span>
<svg class="a" style="left:544px;top:88px;filter:blur(.3px)" width="4" height="3" viewBox="0 0 4 3"><path d="M0 0H4L2 2Z" fill="#777"/></svg>
<svg class="a" style="left:565px;top:46px;filter:blur(.4px)" width="11" height="11" viewBox="0 0 11 11"><path d="M2 0L8 8M9 0L3 8" stroke="#4a6a9a" stroke-width="1.300"/><circle cx="2.500" cy="9" r="1.800" fill="none" stroke="#4a7ac0" stroke-width="1.100"/><circle cx="8.500" cy="9" r="1.800" fill="none" stroke="#4a7ac0" stroke-width="1.100"/></svg>
<svg class="a" style="left:564.5px;top:63px;filter:blur(.4px)" width="11" height="11" viewBox="0 0 11 11"><rect x="0" y="0" width="7" height="8" fill="#dfe6f0" stroke="#7c93b4" stroke-width=".9"/><rect x="3.500" y="3" width="7" height="8" fill="#eef2f8" stroke="#7c93b4" stroke-width=".9"/></svg>
<svg class="a" style="left:580.8px;top:67px;filter:blur(.3px)" width="3.4" height="2.7" viewBox="0 0 3.4 2.7"><path d="M0 0H3.4L1.7 1.7Z" fill="#777"/></svg>
<svg class="a" style="left:565px;top:81px;filter:blur(.4px)" width="12" height="11" viewBox="0 0 12 11"><path d="M1 10L6 5" stroke="#e2b23a" stroke-width="3"/><path d="M6 5L11 0" stroke="#555" stroke-width="2.200"/></svg>
<svg class="a" style="left:600px;top:44px;filter:blur(.45px)" width="24" height="22" viewBox="0 0 24 22"><rect x="2.500" y="3.500" width="21" height="18" fill="#fff" stroke="#b4b4b4" stroke-width="1"/><rect x="6" y="8" width="14" height="3" fill="#d8d8d8"/><rect x="8" y="14" width="10" height="1.500" fill="#d8d8d8"/><path d="M3 0L4 2.200L6.300 2.500L4.600 4L5 6.300L3 5.200L1 6.300L1.400 4L-.3 2.500L2 2.200Z" fill="#f2c83a"/></svg>
<span class="t" style="left:604px;top:74.1px;font-size:8.5px;color:#7c7c7c;letter-spacing:-0.33px;">New</span>
<span class="t" style="left:599px;top:85.1px;font-size:8.5px;color:#7c7c7c;letter-spacing:-0.18px;">Slide</span>
<svg class="a" style="left:621.3px;top:89px;filter:blur(.3px)" width="3.4" height="2.7" viewBox="0 0 3.4 2.7"><path d="M0 0H3.4L1.7 1.7Z" fill="#777"/></svg>
<svg class="a" style="left:632px;top:46px;filter:blur(.45px)" width="13" height="12" viewBox="0 0 13 12"><rect x=".5" y=".5" width="12" height="11" fill="#fff" stroke="#999" stroke-width="1"/><rect x="2" y="2" width="9" height="2" fill="#ccc"/><rect x="2" y="5.500" width="4" height="4.500" fill="#d4d4d4"/><rect x="7" y="5.500" width="4" height="4.500" fill="#d4d4d4"/></svg>
<span class="t" style="left:648.5px;top:48.1px;font-size:8.5px;color:#7c7c7c;letter-spacing:-0.17px;">Layout</span>
<svg class="a" style="left:680.3px;top:51px;filter:blur(.3px)" width="3.4" height="2.7" viewBox="0 0 3.4 2.7"><path d="M0 0H3.4L1.7 1.7Z" fill="#777"/></svg>
<svg class="a" style="left:632px;top:64px;filter:blur(.45px)" width="13" height="12" viewBox="0 0 13 12"><rect x="3.500" y="2.500" width="9" height="9" fill="#fff" stroke="#999" stroke-width="1"/><path d="M5 1.500A4 4 0 0 0 1 5.500" stroke="#2b7ad0" stroke-width="1.400" fill="none"/><path d="M3 0L7 1.500L4 4Z" fill="#2b7ad0"/></svg>
<span class="t" style="left:648.5px;top:66.1px;font-size:8.5px;color:#7c7c7c;letter-spacing:-0.54px;">Reset</span>
<svg class="a" style="left:632px;top:82px;filter:blur(.45px)" width="13" height="13" viewBox="0 0 13 13"><rect x="4" y="4" width="8.500" height="8.500" fill="#fff" stroke="#999" stroke-width="1"/><rect x="1" y="1" width="7" height="3" fill="#f0a050"/><rect x="4" y="4" width="8.500" height="2.500" fill="#e8683a"/><path d="M1.500 0L2.200 1.300L3.600 1.500L2.600 2.500L2.800 4L1.500 3.300L.2 4L.4 2.500L-.6 1.500L.8 1.300Z" fill="#f2c83a"/></svg>
<span class="t" style="left:649px;top:84.1px;font-size:8.5px;color:#7c7c7c;letter-spacing:-0.19px;">Section</span>
<svg class="a" style="left:683.3px;top:87px;filter:blur(.3px)" width="3.4" height="2.7" viewBox="0 0 3.4 2.7"><path d="M0 0H3.4L1.7 1.7Z" fill="#777"/></svg>
<div class="a" style="left:698px;top:48px;width:80px;height:18px;background:#fff;border:1px solid #c6c6c6;border-radius:1px"></div>
<div class="a" style="left:777.5px;top:48px;width:33.5px;height:18px;background:#fff;border:1px solid #c6c6c6;border-radius:1px"></div>
<span class="t" style="left:701.5px;top:52.1px;font-size:8.5px;color:#555;letter-spacing:0.00px;">Calibri (Body)</span>
<svg class="a" style="left:770.8px;top:55px;filter:blur(.3px)" width="3.4" height="2.7" viewBox="0 0 3.4 2.7"><path d="M0 0H3.4L1.7 1.7Z" fill="#666"/></svg>
<span class="t" style="left:782px;top:52.1px;font-size:8.5px;color:#444;letter-spacing:-0.49px;font-weight:700;">11</span>
<svg class="a" style="left:803.8px;top:55px;filter:blur(.3px)" width="3.4" height="2.7" viewBox="0 0 3.4 2.7"><path d="M0 0H3.4L1.7 1.7Z" fill="#666"/></svg>
<span class="t" style="left:816px;top:50.8px;font-size:11px;color:#555;letter-spacing:1.66px;">A</span>
<div class="a" style="left:825px;top:51px;width:2px;height:2px;background:#4a8ad8;"></div>
<span class="t" style="left:835px;top:52.7px;font-size:9px;color:#555;letter-spacing:1.50px;">A</span>
<div class="a" style="left:843px;top:51px;width:2px;height:2px;background:#4a8ad8;"></div>
<svg class="a" style="left:858px;top:51px;filter:blur(.45px)" width="12" height="12" viewBox="0 0 12 12"><path d="M3 6L8 1L12 5L7 10Z" fill="#f07a98"/><path d="M1.500 3.500L4.500 .5" stroke="#555" stroke-width="1"/><path d="M3 6L7 10L5 11.500L1.500 8Z" fill="#f4b8c8"/></svg>
<span class="t" style="left:703px;top:76.2px;font-size:9.5px;color:#666;letter-spacing:-0.36px;font-weight:700;">B</span>
<span class="t" style="left:722.5px;top:76.2px;font-size:9.5px;color:#666;letter-spacing:0.86px;font-style:italic;">I</span>
<span class="t" style="left:739.5px;top:75.2px;font-size:9.5px;color:#666;letter-spacing:0.14px;">U</span>
<div class="a" style="left:739px;top:86px;width:8px;height:1px;background:#777;"></div>
<span class="t" style="left:759px;top:76.2px;font-size:9.5px;color:#555;letter-spacing:0.16px;font-weight:700;">S</span>
<span class="t" style="left:772px;top:76.6px;font-size:8px;color:#666;letter-spacing:0.03px;">abc</span>
<div class="a" style="left:772px;top:82px;width:13px;height:1px;background:#777;"></div>
<span class="t" style="left:791px;top:75.1px;font-size:8.5px;color:#666;letter-spacing:0.56px;font-style:italic;">AV</span>
<svg class="a" style="left:791px;top:85px;filter:blur(.3px)" width="12" height="3" viewBox="0 0 12 3"><path d="M0 1.500H12" stroke="#3a7ad8" stroke-width="1"/><rect x="0" y="0" width="2" height="3" fill="#3a7ad8"/><rect x="10" y="0" width="2" height="3" fill="#3a7ad8"/></svg>
<svg class="a" style="left:806.4px;top:80px;filter:blur(.3px)" width="3.2" height="2.6" viewBox="0 0 3.2 2.6"><path d="M0 0H3.2L1.6 1.6Z" fill="#777"/></svg>
<span class="t" style="left:815px;top:76.2px;font-size:9.5px;color:#666;letter-spacing:0.44px;">Aa</span>
<svg class="a" style="left:830.9px;top:80px;filter:blur(.3px)" width="3.2" height="2.6" viewBox="0 0 3.2 2.6"><path d="M0 0H3.2L1.6 1.6Z" fill="#777"/></svg>
<span class="t" style="left:848px;top:74.3px;font-size:10.5px;color:#666;letter-spacing:3.00px;">A</span>
<div class="a" style="left:846px;top:85.5px;width:14px;height:2.5px;background:#e0202a;border-radius:1px;filter:blur(.4px)"></div>
<svg class="a" style="left:865.4px;top:80px;filter:blur(.3px)" width="3.2" height="2.6" viewBox="0 0 3.2 2.6"><path d="M0 0H3.2L1.6 1.6Z" fill="#777"/></svg>
<svg class="a" style="left:882.5px;top:51px;filter:blur(.4px)" width="12" height="12" viewBox="0 0 12 12"><rect x="0" y="0.0" width="2.200" height="2.200" fill="#3a7ad8"/><rect x="4.500" y="0.6" width="7.500" height="1.100" fill="#8a8a8a"/><rect x="0" y="4.5" width="2.200" height="2.200" fill="#3a7ad8"/><rect x="4.500" y="5.1" width="7.500" height="1.100" fill="#8a8a8a"/><rect x="0" y="9.0" width="2.200" height="2.200" fill="#3a7ad8"/><rect x="4.500" y="9.6" width="7.500" height="1.100" fill="#8a8a8a"/></svg>
<svg class="a" style="left:898.7px;top:55px;filter:blur(.3px)" width="3.6" height="2.8" viewBox="0 0 3.6 2.8"><path d="M0 0H3.6L1.8 1.8Z" fill="#555"/></svg>
<svg class="a" style="left:908.5px;top:51px;filter:blur(.4px)" width="12" height="12" viewBox="0 0 12 12"><rect x="0" y="0.0" width="2.200" height="2.200" fill="#3a7ad8"/><rect x="4.500" y="0.6" width="7.500" height="1.100" fill="#8a8a8a"/><rect x="0" y="4.5" width="2.200" height="2.200" fill="#3a7ad8"/><rect x="4.500" y="5.1" width="7.500" height="1.100" fill="#8a8a8a"/><rect x="0" y="9.0" width="2.200" height="2.200" fill="#3a7ad8"/><rect x="4.500" y="9.6" width="7.500" height="1.100" fill="#8a8a8a"/></svg>
<svg class="a" style="left:924.7px;top:55px;filter:blur(.3px)" width="3.6" height="2.8" viewBox="0 0 3.6 2.8"><path d="M0 0H3.6L1.8 1.8Z" fill="#555"/></svg>
<svg class="a" style="left:942px;top:52px;filter:blur(.4px)" width="13" height="10" viewBox="0 0 13 10"><path d="M6 0H13M6 3H13M6 6H13M6 9H13" stroke="#c4c4c4" stroke-width="1"/><path d="M4.500 2L0 4.500L4.500 7Z" fill="#c8c8c8"/></svg>
<svg class="a" style="left:960px;top:52px;filter:blur(.4px)" width="13" height="10" viewBox="0 0 13 10"><path d="M6 0H13M6 3H13M6 6H13M6 9H13" stroke="#c4c4c4" stroke-width="1"/><path d="M0 2L4.500 4.500L0 7Z" fill="#c8c8c8"/></svg>
<svg class="a" style="left:986px;top:50px;filter:blur(.4px)" width="12" height="13" viewBox="0 0 12 13"><path d="M2 1.500V11.500" stroke="#3a7ad8" stroke-width="1.200"/><path d="M0 3L2 0L4 3ZM0 10L2 13L4 10Z" fill="#3a7ad8"/><path d="M6 2H12M6 4.500H12M6 7H12M6 9.500H12M6 11.500H12" stroke="#9a9a9a" stroke-width="1"/></svg>
<svg class="a" style="left:1000.2px;top:55px;filter:blur(.3px)" width="3.6" height="2.8" viewBox="0 0 3.6 2.8"><path d="M0 0H3.6L1.8 1.8Z" fill="#555"/></svg>
<svg class="a" style="left:1009px;top:45px;filter:blur(.4px)" width="13" height="13" viewBox="0 0 13 13"><path d="M1 2V12M4 2V12M7 4V12" stroke="#9a9a9a" stroke-width="1.200"/><path d="M10.500 12V3" stroke="#3a7ad8" stroke-width="1.200"/><path d="M8.500 4L10.500 0L12.500 4Z" fill="#3a7ad8"/><path d="M0 12.500H13" stroke="#aaa" stroke-width=".8"/></svg>
<svg class="a" style="left:1025.3px;top:50px;filter:blur(.3px)" width="3.4" height="2.7" viewBox="0 0 3.4 2.7"><path d="M0 0H3.4L1.7 1.7Z" fill="#555"/></svg>
<svg class="a" style="left:1009px;top:63.5px;filter:blur(.4px)" width="13" height="13" viewBox="0 0 13 13"><rect x=".5" y=".5" width="12" height="12" fill="#fff" stroke="#999" stroke-width="1" stroke-dasharray="2 1"/><path d="M6.500 2V11" stroke="#3a7ad8" stroke-width="1"/><path d="M5 3.500L6.500 1L8 3.500ZM5 9.500L6.500 12L8 9.500Z" fill="#3a7ad8"/></svg>
<svg class="a" style="left:1025.3px;top:68.5px;filter:blur(.3px)" width="3.4" height="2.7" viewBox="0 0 3.4 2.7"><path d="M0 0H3.4L1.7 1.7Z" fill="#555"/></svg>
<svg class="a" style="left:1009px;top:81px;filter:blur(.5px)" width="14" height="14" viewBox="0 0 14 14"><path d="M0 1H9L12 4.500L9 8H0L2.500 4.500Z" fill="#4caa3c"/><rect x="6" y="6" width="7" height="7" fill="#dfe8dc" stroke="#aab" stroke-width=".6"/></svg>
<svg class="a" style="left:1025.3px;top:87px;filter:blur(.3px)" width="3.4" height="2.7" viewBox="0 0 3.4 2.7"><path d="M0 0H3.4L1.7 1.7Z" fill="#555"/></svg>
<svg class="a" style="left:883px;top:77px;filter:blur(.4px)" width="12" height="10" viewBox="0 0 12 10"><rect x="0" y="0.0" width="11" height="1.200" fill="#9a9a9a"/><rect x="0" y="2.5" width="7" height="1.200" fill="#9a9a9a"/><rect x="0" y="5.0" width="11" height="1.200" fill="#9a9a9a"/><rect x="0" y="7.5" width="7" height="1.200" fill="#9a9a9a"/></svg>
<div class="a" style="left:898px;top:72px;width:18px;height:18px;background:#f8c6ad;filter:blur(.4px)"></div>
<svg class="a" style="left:901.5px;top:77px;filter:blur(.4px)" width="12" height="10" viewBox="0 0 12 10"><rect x="0" y="0.0" width="11" height="1.200" fill="#8a7a72"/><rect x="2" y="2.5" width="7" height="1.200" fill="#8a7a72"/><rect x="0" y="5.0" width="11" height="1.200" fill="#8a7a72"/><rect x="2" y="7.5" width="7" height="1.200" fill="#8a7a72"/></svg>
<svg class="a" style="left:919px;top:77px;filter:blur(.4px)" width="12" height="10" viewBox="0 0 12 10"><rect x="0" y="0.0" width="11" height="1.200" fill="#9a9a9a"/><rect x="4" y="2.5" width="7" height="1.200" fill="#9a9a9a"/><rect x="0" y="5.0" width="11" height="1.200" fill="#9a9a9a"/><rect x="4" y="7.5" width="7" height="1.200" fill="#9a9a9a"/></svg>
<svg class="a" style="left:937px;top:77px;filter:blur(.4px)" width="12" height="10" viewBox="0 0 12 10"><rect x="0" y="0.0" width="11" height="1.200" fill="#9a9a9a"/><rect x="0" y="2.5" width="11" height="1.200" fill="#9a9a9a"/><rect x="0" y="5.0" width="11" height="1.200" fill="#9a9a9a"/><rect x="0" y="7.5" width="11" height="1.200" fill="#9a9a9a"/></svg>
<svg class="a" style="left:962px;top:76px;filter:blur(.4px)" width="12" height="11" viewBox="0 0 12 11"><path d="M0 1H5M0 3.500H5M0 6H5M0 8.500H5M7 1H12M7 3.500H12M7 6H12M7 8.500H12" stroke="#a4aee8" stroke-width="1.300"/></svg>
<svg class="a" style="left:976.8px;top:80px;filter:blur(.3px)" width="3.4" height="2.7" viewBox="0 0 3.4 2.7"><path d="M0 0H3.4L1.7 1.7Z" fill="#555"/></svg>
<svg class="a" style="left:1043px;top:43px;filter:blur(.45px)" width="25" height="25" viewBox="0 0 25 25"><rect x="1" y="5" width="11" height="11" fill="none" stroke="#6a9ad8" stroke-width="1.200"/><circle cx="17" cy="7.500" r="6.500" fill="#fff" stroke="#6a9ad8" stroke-width="1.200"/><path d="M12 11L20 16L13 23L5 17Z" fill="#fff" stroke="#6a9ad8" stroke-width="1.200"/></svg>
<span class="t" style="left:1042px;top:75.1px;font-size:8.5px;color:#7c7c7c;letter-spacing:-0.47px;">Shapes</span>
<svg class="a" style="left:1053.3px;top:88.5px;filter:blur(.3px)" width="3.4" height="2.7" viewBox="0 0 3.4 2.7"><path d="M0 0H3.4L1.7 1.7Z" fill="#777"/></svg>
<svg class="a" style="left:1081px;top:45px;filter:blur(.45px)" width="24" height="23" viewBox="0 0 24 23"><rect x="5" y="5" width="13" height="13" fill="#ecc678"/><rect x=".5" y=".5" width="8" height="8" fill="#fff" stroke="#aaa" stroke-width="1"/><rect x="14.500" y="13.500" width="8" height="8" fill="#fff" stroke="#999" stroke-width="1"/></svg>
<span class="t" style="left:1078.5px;top:75.1px;font-size:8.5px;color:#7c7c7c;letter-spacing:-0.11px;">Arrange</span>
<svg class="a" style="left:1090.8px;top:88.5px;filter:blur(.3px)" width="3.4" height="2.7" viewBox="0 0 3.4 2.7"><path d="M0 0H3.4L1.7 1.7Z" fill="#777"/></svg>
<svg class="a" style="left:1118px;top:46px;filter:blur(.45px)" width="26" height="24" viewBox="0 0 26 24"><rect x=".5" y=".5" width="21" height="20" rx="5" fill="#fff" stroke="#c4c4c4" stroke-width="1.200"/><path d="M24 3L14 17" stroke="#555" stroke-width="2.600"/><path d="M16 15L12 21" stroke="#c8c8c8" stroke-width="2.600"/><path d="M8 22H16L13 17Z" fill="#3a6ad0"/></svg>
<span class="t" style="left:1120px;top:75.1px;font-size:8.5px;color:#7c7c7c;letter-spacing:-0.35px;">Quick</span>
<span class="t" style="left:1116px;top:86.1px;font-size:8.5px;color:#7c7c7c;letter-spacing:-0.36px;">Styles</span>
<svg class="a" style="left:1141.3px;top:89px;filter:blur(.3px)" width="3.4" height="2.7" viewBox="0 0 3.4 2.7"><path d="M0 0H3.4L1.7 1.7Z" fill="#777"/></svg>
<svg class="a" style="left:1151px;top:44px;filter:blur(.45px)" width="14" height="13" viewBox="0 0 14 13"><path d="M3 4L7 .5L11.500 5L6.500 8Z" fill="#eef0f4" stroke="#777" stroke-width=".9"/><path d="M11.500 4C13 6 13 7 12 7.500" stroke="#3a6ac0" stroke-width="1.300" fill="none"/><rect x="0" y="9.500" width="13" height="3" rx="1" fill="#e8622a"/></svg>
<svg class="a" style="left:1151px;top:62px;filter:blur(.45px)" width="14" height="13" viewBox="0 0 14 13"><path d="M1.500 9L10 1.500L12 3L3.500 9.500Z" fill="#3a6ac8"/><rect x="0" y="10.500" width="13" height="2.500" rx="1" fill="#3a7ad8"/><rect x=".5" y=".5" width="9" height="8" fill="none" stroke="#c8d0dc" stroke-width=".7"/></svg>
<svg class="a" style="left:1152px;top:81px;filter:blur(.5px)" width="12" height="11" viewBox="0 0 12 11"><ellipse cx="6" cy="5.500" rx="5.500" ry="5" fill="#555"/><ellipse cx="4.500" cy="4" rx="3.500" ry="3" fill="#e8e8e8"/></svg>
<svg class="a" style="left:1169.3px;top:49.5px;filter:blur(.3px)" width="3.4" height="2.7" viewBox="0 0 3.4 2.7"><path d="M0 0H3.4L1.7 1.7Z" fill="#555"/></svg>
<svg class="a" style="left:1169.3px;top:67px;filter:blur(.3px)" width="3.4" height="2.7" viewBox="0 0 3.4 2.7"><path d="M0 0H3.4L1.7 1.7Z" fill="#555"/></svg>
<svg class="a" style="left:1169.3px;top:85px;filter:blur(.3px)" width="3.4" height="2.7" viewBox="0 0 3.4 2.7"><path d="M0 0H3.4L1.7 1.7Z" fill="#555"/></svg>
<div class="a" style="left:1190.5px;top:45px;width:21px;height:19.5px;background:#fff;border:1px solid #8a8a8a;border-radius:1.500px;filter:blur(.3px)"></div>
<svg class="a" style="left:1196px;top:50px;filter:blur(.45px)" width="10" height="9" viewBox="0 0 10 9"><rect x="0" y="2" width="4" height="7" rx="1.500" fill="#333"/><rect x="6" y="2" width="4" height="7" rx="1.500" fill="#333"/><rect x="2" y="0" width="6" height="4" fill="#444"/></svg>
<span class="t" style="left:1186px;top:69.1px;font-size:8.5px;color:#9a9a9a;letter-spacing:-0.14px;">Editing</span>
<svg class="a" style="left:1198.8px;top:85px;filter:blur(.3px)" width="3.4" height="2.7" viewBox="0 0 3.4 2.7"><path d="M0 0H3.4L1.7 1.7Z" fill="#666"/></svg>
<span class="t" style="left:533px;top:99.6px;font-size:8px;color:#9c9c9c;letter-spacing:0.08px;">Clipboard</span>
<svg class="a" style="left:582px;top:103px;filter:blur(.3px)" width="5" height="5" viewBox="0 0 5 5"><path d="M0 0H3M0 0V3M1.5 1.5L4.5 4.5M4.5 2.5V4.5H2.5" stroke="#999" stroke-width=".8" fill="none"/></svg>
<span class="t" style="left:630px;top:99.6px;font-size:8px;color:#9c9c9c;letter-spacing:-0.30px;">Slides</span>
<span class="t" style="left:766px;top:99.6px;font-size:8px;color:#9c9c9c;letter-spacing:0.25px;">Font</span>
<svg class="a" style="left:867px;top:103px;filter:blur(.3px)" width="5" height="5" viewBox="0 0 5 5"><path d="M0 0H3M0 0V3M1.5 1.5L4.5 4.5M4.5 2.5V4.5H2.5" stroke="#999" stroke-width=".8" fill="none"/></svg>
<span class="t" style="left:936.5px;top:99.6px;font-size:8px;color:#9c9c9c;letter-spacing:0.02px;">Paragraph</span>
<svg class="a" style="left:1026px;top:103px;filter:blur(.3px)" width="5" height="5" viewBox="0 0 5 5"><path d="M0 0H3M0 0V3M1.5 1.5L4.5 4.5M4.5 2.5V4.5H2.5" stroke="#999" stroke-width=".8" fill="none"/></svg>
<span class="t" style="left:1122px;top:99.6px;font-size:8px;color:#9c9c9c;letter-spacing:0.09px;">Drawing</span>
<svg class="a" style="left:1173px;top:103px;filter:blur(.3px)" width="5" height="5" viewBox="0 0 5 5"><path d="M0 0H3M0 0V3M1.5 1.5L4.5 4.5M4.5 2.5V4.5H2.5" stroke="#999" stroke-width=".8" fill="none"/></svg>
<svg class="a" style="left:1223px;top:102px;filter:blur(.3px)" width="6" height="4" viewBox="0 0 6 4"><path d="M.5 3.500L3 1L5.500 3.500" stroke="#777" stroke-width="1" fill="none"/></svg>
<div class="a" style="left:524px;top:109.5px;width:718px;height:1px;background:#ebebeb;"></div>
<div class="a" style="left:524px;top:110px;width:12px;height:533px;background:linear-gradient(90deg,#e9e9e9,#fff);"></div>
<div class="a" style="left:672px;top:111px;width:1px;height:532px;background:#f5f5f5;"></div>
<span class="t" style="left:528.5px;top:129.9px;font-size:12px;color:#5a5a5a;letter-spacing:0.83px;filter:blur(0.5px);">1</span>
<span class="t" style="left:528.5px;top:202.9px;font-size:12px;color:#5a5a5a;letter-spacing:0.83px;filter:blur(0.5px);">2</span>
<span class="t" style="left:528.5px;top:275.9px;font-size:12px;color:#5a5a5a;letter-spacing:0.83px;filter:blur(0.5px);">3</span>
<span class="t" style="left:528.5px;top:348.9px;font-size:12px;color:#5a5a5a;letter-spacing:0.83px;filter:blur(0.5px);">4</span>
<span class="t" style="left:528.5px;top:421.9px;font-size:12px;color:#5a5a5a;letter-spacing:0.83px;filter:blur(0.5px);">5</span>
<span class="t" style="left:528.5px;top:494.9px;font-size:12px;color:#5a5a5a;letter-spacing:0.83px;filter:blur(0.5px);">6</span>
<span class="t" style="left:528.5px;top:567.9px;font-size:12px;color:#5a5a5a;letter-spacing:0.83px;filter:blur(0.5px);">7</span>
<svg class="a" width="0" height="0" style="left:0;top:0"><defs><radialGradient id="rgA" cx=".56" cy=".5" r=".98" gradientTransform="translate(.5 .5) scale(.6 1) translate(-.5 -.5)"><stop offset="0" stop-color="#d8d8d8"/><stop offset=".35" stop-color="#8c8c8c"/><stop offset=".75" stop-color="#2c2c2c"/><stop offset="1" stop-color="#181818"/></radialGradient><radialGradient id="rgB" cx=".5" cy=".5" r=".88" gradientTransform="translate(.5 .5) scale(.52 1) translate(-.5 -.5)"><stop offset="0" stop-color="#ffffff"/><stop offset=".2" stop-color="#d0d0d0"/><stop offset=".55" stop-color="#5a5a5a"/><stop offset=".85" stop-color="#1c1c1c"/><stop offset="1" stop-color="#111"/></radialGradient><radialGradient id="rgC" cx=".48" cy=".32" r=".6"><stop offset="0" stop-color="#a8a8a8"/><stop offset=".4" stop-color="#6a6a6a"/><stop offset=".8" stop-color="#222"/><stop offset="1" stop-color="#151515"/></radialGradient></defs></svg>
<div class="a" style="left:539px;top:130px;width:105px;height:61px;background:#e2522c;filter:blur(.3px)"></div>
<svg class="a" style="left:541px;top:132px;filter:blur(.4px)" width="101" height="57" viewBox="695 237 519 291"><use href="#slidepic"/><g fill="#cf6312"><rect x="733" y="256" width="58" height="9"/><rect x="733" y="276" width="76" height="9"/></g><g fill="#d4d4cc"><rect x="733" y="346" width="68" height="6"/><rect x="735" y="362" width="34" height="12"/><rect x="733" y="403" width="80" height="6"/><rect x="733" y="420" width="36" height="12"/><rect x="733" y="460" width="88" height="6"/><rect x="733" y="477" width="40" height="6"/></g></svg>
<svg class="a" style="left:541px;top:205px;filter:blur(.5px)" width="101" height="57" viewBox="0 0 101 57"><rect width="101" height="57" fill="#161616"/><rect x="0" y="3" width="101" height="51" fill="url(#rgA)"/><rect x="15" y="4" width="20" height="2" fill="#f07a18"/><rect x="15" y="8" width="22" height="2" fill="#f07a18"/><rect x="15" y="12" width="15" height="2" fill="#f07a18"/><path d="M50 16A17 17 0 0 0 50 44" stroke="#7a7a7a" stroke-width="5" fill="none"/><rect x="9" y="27" width="26" height="14" fill="#0c0c0c" stroke="#555" stroke-width=".8"/><rect x="38" y="23" width="12" height="9" fill="#f07a18"/><rect x="40" y="34" width="8" height="2" fill="#f07a18"/><rect x="56" y="28" width="8" height="5" fill="#f07a18"/><rect x="66" y="28" width="8" height="5" fill="#f07a18"/><rect x="66" y="34.500" width="8" height="5" fill="#f07a18"/><rect x="56" y="21" width="8" height="5" fill="#eee"/><rect x="66" y="21" width="8" height="5" fill="#eee"/><rect x="76" y="21" width="6" height="5" fill="#eee"/><rect x="62" y="5" width="8" height="5" fill="#f4f4f4"/><rect x="83" y="25" width="9" height="6" fill="#f4f4f4"/><rect x="62" y="43" width="9" height="5" fill="#e8e8e8"/><rect x="52" y="44" width="8" height="9" fill="#3a3a3a"/></svg>
<svg class="a" style="left:541px;top:278px;filter:blur(.5px)" width="101" height="57" viewBox="0 0 101 57"><rect width="101" height="57" fill="#161616"/><rect x="0" y="3" width="101" height="51" fill="url(#rgC)"/><rect x="5" y="4" width="62" height="2.200" fill="#f07a18"/><rect x="5" y="21" width="1.500" height="28" fill="#999"/><path d="M10 44L18 34L27 38L20 48Z" fill="#d8d8d8"/><path d="M13 43L19 37L24 39L19 45Z" fill="#333"/><rect x="33" y="35" width="15" height="10" fill="#4a4638"/><rect x="35" y="36.500" width="11" height="7" fill="#e0e6d0"/><rect x="56" y="30" width="9" height="17" rx="1.500" fill="#2a2a2a"/><rect x="58" y="33" width="5" height="5" fill="#777"/><rect x="72" y="33" width="19" height="13" rx="2" fill="#3a3c5a"/><ellipse cx="81.500" cy="39" rx="8" ry="5" fill="#c4c8ee"/><rect x="11" y="49" width="14" height="2" fill="#ccc"/><rect x="33" y="49" width="10" height="2" fill="#ccc"/><rect x="53" y="49" width="14" height="2" fill="#ccc"/><rect x="72" y="49" width="16" height="2" fill="#ccc"/></svg>
<svg class="a" style="left:541px;top:351px;filter:blur(.5px)" width="101" height="57" viewBox="0 0 101 57"><rect width="101" height="57" fill="#161616"/><rect x="0" y="3" width="101" height="51" fill="url(#rgC)"/><rect x="8" y="6" width="63" height="2.500" fill="#f07a18"/><rect x="8" y="11" width="62" height="1.200" fill="#bbb"/><rect x="13" y="17" width="5" height="25" fill="#4a4a4a"/><rect x="19" y="22" width="3" height="20" fill="#333"/><path d="M38 28L59 21V41L40 42Z" fill="#101830"/><path d="M40 29L57 23.500V39L41.500 40Z" fill="#2a6ed0"/><rect x="71" y="26" width="22" height="16" fill="#0a0a0a" stroke="#444" stroke-width=".7"/><rect x="4" y="45" width="27" height="2.500" fill="#ddd"/><rect x="41" y="45" width="16" height="2.500" fill="#ddd"/><rect x="74" y="45" width="18" height="2.500" fill="#ddd"/></svg>
<svg class="a" style="left:541px;top:424.5px;filter:blur(.5px)" width="101" height="57" viewBox="0 0 101 57"><rect width="101" height="57" fill="#161616"/><rect x="0" y="3" width="101" height="51" fill="url(#rgB)"/><rect x="13" y="6" width="14" height="2" fill="#f07a18"/><rect x="13" y="9.500" width="12" height="2" fill="#f07a18"/><rect x="13" y="13" width="8" height="2" fill="#f07a18"/><rect x="13" y="23" width="18" height="3.500" fill="#eee"/><rect x="13" y="29" width="19" height="1.500" fill="#ddd"/><rect x="13" y="33" width="10" height="1.500" fill="#ddd"/><rect x="13" y="38" width="18" height="3.500" fill="#eee"/><rect x="13" y="45" width="19" height="1.500" fill="#ddd"/><rect x="13" y="49" width="10" height="1.500" fill="#ddd"/><circle cx="64" cy="34.500" r="15.500" fill="#f47a14"/><path d="M64 34.500L50.500 27A15.500 15.500 0 0 0 52 44.500Z" fill="#b84c04"/><path d="M64 34.500L52 44.500A15.500 15.500 0 0 0 79.300 37Z" fill="#ffb47a"/><path d="M64 34.500L56 21.500L50.500 27Z" fill="#d8600a"/><rect x="68" y="27" width="6" height="4" rx="1" fill="#111"/><circle cx="71" cy="40" r="2" fill="#111"/><rect x="81" y="23" width="6" height="1.500" fill="#ccc"/><rect x="81" y="45" width="6" height="1.500" fill="#ccc"/></svg>
<svg class="a" style="left:541px;top:497.5px;filter:blur(.5px)" width="101" height="57" viewBox="0 0 101 57"><rect width="101" height="57" fill="#161616"/><rect x="0" y="3" width="101" height="51" fill="url(#rgA)"/><defs><linearGradient id="lg6" x1="0" x2="1"><stop offset="0" stop-color="#d0d0d0"/><stop offset=".55" stop-color="#a8a8a8" stop-opacity=".9"/><stop offset="1" stop-color="#888" stop-opacity="0"/></linearGradient></defs><rect x="0" y="19" width="70" height="32" fill="url(#lg6)"/><rect x="12" y="5" width="12" height="2.200" fill="#f07a18"/><rect x="12" y="9" width="22" height="2.500" fill="#f07a18"/><rect x="12" y="37" width="8" height="12" fill="#f08a3a"/><rect x="13.5" y="39" width="5" height="8" fill="#f8b482" opacity=".7"/><rect x="13" y="21.500" width="6" height="4.500" rx="1" fill="#151515"/><rect x="22" y="32" width="8" height="17" fill="#f08a3a"/><rect x="23.5" y="34" width="5" height="13" fill="#f8b482" opacity=".7"/><rect x="23" y="21.500" width="6" height="4.500" rx="1" fill="#151515"/><rect x="31" y="27" width="8" height="22" fill="#f08a3a"/><rect x="32.5" y="29" width="5" height="18" fill="#f8b482" opacity=".7"/><rect x="32" y="21.500" width="6" height="4.500" rx="1" fill="#151515"/><rect x="40" y="27" width="8" height="22" fill="#f08a3a"/><rect x="41.5" y="29" width="5" height="18" fill="#f8b482" opacity=".7"/><rect x="41" y="21.500" width="6" height="4.500" rx="1" fill="#151515"/><rect x="49" y="27" width="8" height="22" fill="#f08a3a"/><rect x="50.5" y="29" width="5" height="18" fill="#f8b482" opacity=".7"/><rect x="50" y="21.500" width="6" height="4.500" rx="1" fill="#151515"/><rect x="59" y="27" width="37" height="11" fill="#e6e0cc"/><rect x="62" y="30" width="18" height="5" fill="#f0b890"/><rect x="82" y="30" width="11" height="5" fill="#888"/></svg>
<svg class="a" style="left:541px;top:570.5px;filter:blur(.5px)" width="101" height="57" viewBox="0 0 101 57"><rect width="101" height="57" fill="#161616"/><rect x="0" y="3" width="101" height="51" fill="url(#rgB)"/></svg>
<div class="a" style="left:656px;top:121.5px;width:12.5px;height:10.5px;background:#fff;border:1px solid #dedede;border-radius:1px"></div>
<svg class="a" style="left:660px;top:125px;filter:blur(.3px)" width="5" height="3" viewBox="0 0 5 3"><path d="M0 3H5L2.500 0Z" fill="#777"/></svg>
<div class="a" style="left:656px;top:141px;width:12.5px;height:50px;background:#fff;border:1px solid #dedede;border-radius:1.500px"></div>
<div class="a" style="left:656px;top:632.5px;width:12.5px;height:10.5px;background:#fff;border:1px solid #dedede;border-radius:1px"></div>
<svg class="a" style="left:660px;top:636px;filter:blur(.3px)" width="5" height="3" viewBox="0 0 5 3"><path d="M0 0H5L2.500 3Z" fill="#777"/></svg>
<div class="a" style="left:1229px;top:120px;width:11.5px;height:11.5px;background:#fff;border:1px solid #e0e0e0;border-radius:1px"></div>
<svg class="a" style="left:1232.5px;top:124px;filter:blur(.3px)" width="5" height="3" viewBox="0 0 5 3"><path d="M0 3H5L2.500 0Z" fill="#777"/></svg>
<div class="a" style="left:1229px;top:133px;width:11.5px;height:49px;background:#fff;border:1px solid #e0e0e0;border-radius:1.500px"></div>
<div class="a" style="left:1229px;top:588.5px;width:11.5px;height:11px;background:#fff;border:1px solid #e0e0e0;border-radius:1px"></div>
<svg class="a" style="left:1232.5px;top:592.5px;filter:blur(.3px)" width="5" height="3" viewBox="0 0 5 3"><path d="M0 0H5L2.500 3Z" fill="#777"/></svg>
<svg class="a" style="left:1232px;top:606px;filter:blur(.4px)" width="6" height="6" viewBox="0 0 6 6"><path d="M0 3L3 0L6 3ZM0 6L3 3L6 6Z" fill="#666"/></svg>
<svg class="a" style="left:1232px;top:619px;filter:blur(.4px)" width="6" height="6" viewBox="0 0 6 6"><path d="M0 0L3 3L6 0ZM0 3L3 6L6 3Z" fill="#666"/></svg>
<div class="a" style="left:522px;top:643px;width:722px;height:20px;background:#d34a2a;"></div>
<span class="t" style="left:534px;top:649.1px;font-size:7.5px;color:#fbe4dc;letter-spacing:0.40px;">SLIDE 1 OF 10</span>
<svg class="a" style="left:600px;top:647.5px;filter:blur(.35px)" width="12" height="11" viewBox="0 0 12 11"><rect x=".5" y=".5" width="11" height="9" fill="none" stroke="#fbe4dc" stroke-width="1"/><path d="M6 .5V5H11.500M3 9.500V7.500H8" stroke="#fbe4dc" stroke-width="1" fill="none"/></svg>
<svg class="a" style="left:793px;top:647px;filter:blur(.35px)" width="8" height="12" viewBox="0 0 8 12"><path d="M4 0L6 5H2Z" fill="#fbe4dc"/><rect x="0" y="6" width="8" height="5" fill="none" stroke="#fbe4dc" stroke-width="1"/></svg>
<span class="t" style="left:808px;top:649.1px;font-size:7.5px;color:#fbe4dc;letter-spacing:0.23px;">NOTES</span>
<svg class="a" style="left:852.5px;top:647px;filter:blur(.35px)" width="12" height="11" viewBox="0 0 12 11"><path d="M0 0H12V8H6L3 11V8H0Z" fill="#fff"/></svg>
<span class="t" style="left:867.5px;top:649.1px;font-size:7.5px;color:#fbe4dc;letter-spacing:0.72px;">COMMENTS</span>
<div class="a" style="left:935px;top:643px;width:31px;height:20px;background:#b93d20;"></div>
<svg class="a" style="left:945px;top:647px;filter:blur(.35px)" width="12" height="12" viewBox="0 0 12 12"><rect width="12" height="12" fill="#fbe4dc"/><rect x="6.500" y="1.500" width="4" height="4" fill="#b93d20"/><path d="M4.500 0V12" stroke="#b93d20" stroke-width=".8"/></svg>
<svg class="a" style="left:976px;top:647px;filter:blur(.35px)" width="14" height="12" viewBox="0 0 14 12"><rect x="0" y="0" width="6" height="5" fill="#fff"/><rect x="8" y="0" width="6" height="5" fill="#fff"/><rect x="0" y="7" width="6" height="5" fill="#fff"/><rect x="8" y="7" width="6" height="5" fill="#fff"/></svg>
<svg class="a" style="left:1008px;top:647px;filter:blur(.4px)" width="14" height="12" viewBox="0 0 14 12"><path d="M0 1L6.500 0V11L0 12ZM14 1L7.500 0V11L14 12Z" fill="#f8d8cc"/></svg>
<svg class="a" style="left:1041px;top:647px;filter:blur(.4px)" width="13" height="12" viewBox="0 0 13 12"><rect x="0" y="0" width="13" height="2" fill="#fbe4dc"/><rect x="1.500" y="2" width="10" height="5.500" fill="none" stroke="#fbe4dc" stroke-width="1"/><path d="M6.500 7.500V10M4 11H9" stroke="#fbe4dc" stroke-width="1"/></svg>
<div class="a" style="left:1067px;top:653px;width:4px;height:1px;background:#fbe4dc;"></div>
<div class="a" style="left:1075px;top:653px;width:86px;height:1px;background:#f0b8a6;"></div>
<div class="a" style="left:1116.5px;top:647px;width:2.5px;height:12px;background:#fff;filter:blur(.3px)"></div>
<div class="a" style="left:1163.5px;top:653px;width:5px;height:1px;background:#fbe4dc;"></div>
<div class="a" style="left:1165.5px;top:651px;width:1px;height:5px;background:#fbe4dc;"></div>
<span class="t" style="left:1182px;top:649.1px;font-size:7.5px;color:#fbe4dc;letter-spacing:0.70px;">100%</span>
<svg class="a" style="left:1216px;top:647px;filter:blur(.35px)" width="13" height="12" viewBox="0 0 13 12"><rect x=".5" y=".5" width="12" height="11" fill="none" stroke="#fbe4dc" stroke-width="1.200"/><path d="M3 3L10 9M10 3L3 9" stroke="#fbe4dc" stroke-width="1.200"/></svg>

<svg class="a" style="left:695px;top:237px" width="519" height="291" viewBox="695 237 519 291">
<defs>
<clipPath id="sc"><rect x="695" y="237" width="519" height="291"/></clipPath>
<filter id="leaf" x="0" y="0" width="1" height="1" color-interpolation-filters="sRGB"><feTurbulence type="fractalNoise" baseFrequency="0.06 0.05" numOctaves="3" seed="7"/>
<feColorMatrix type="matrix" values="0.95 0 0 0 -0.28  1.15 0 0 0 -0.27  0.5 0 0 0 -0.13  0 0 0 0 1"/></filter>
<filter id="leaf2" x="0" y="0" width="1" height="1" color-interpolation-filters="sRGB"><feTurbulence type="fractalNoise" baseFrequency="0.07 0.06" numOctaves="3" seed="11"/>
<feColorMatrix type="matrix" values="1.1 0 0 0 -0.26  1.4 0 0 0 -0.18  0.6 0 0 0 -0.16  0 0 0 0 1"/></filter>
<filter id="skirt" x="0" y="0" width="1" height="1" color-interpolation-filters="sRGB"><feTurbulence type="fractalNoise" baseFrequency="0.28" numOctaves="2" seed="5"/>
<feColorMatrix type="matrix" values="0.2 0 0 0 0.55  1.5 0 0 0 -0.66  1.8 0 0 0 -0.76  0 0 0 0 1"/><feComposite in2="SourceGraphic" operator="in"/></filter>
<filter id="b1"><feGaussianBlur stdDeviation="1.1"/></filter>
<filter id="b2"><feGaussianBlur stdDeviation="2.2"/></filter>
<filter id="b4"><feGaussianBlur stdDeviation="4"/></filter>
<linearGradient id="purp" x1="0" y1="0" x2="1" y2="1"><stop offset="0" stop-color="#3a24a8"/><stop offset=".5" stop-color="#4b2ab4"/><stop offset="1" stop-color="#2c1a86"/></linearGradient>
<linearGradient id="pang" x1="0" y1="0" x2="0" y2="1"><stop offset="0" stop-color="#1d1e19" stop-opacity=".86"/><stop offset=".72" stop-color="#22221e" stop-opacity=".86"/><stop offset="1" stop-color="#454541" stop-opacity=".88"/></linearGradient>
<linearGradient id="leg" x1="0" y1="0" x2="0" y2="1"><stop offset="0" stop-color="#e4b096"/><stop offset="1" stop-color="#cf9478"/></linearGradient>
</defs>
<g clip-path="url(#sc)" id="slidepic">
<rect x="695" y="237" width="519" height="291" fill="#f6f6f4"/>
<!-- foliage wall left -->
<rect x="695" y="237" width="270" height="291" fill="#2f5a1e"/>
<rect x="695" y="237" width="270" height="291" filter="url(#leaf)"/>
<!-- floor bottom-left -->
<path d="M695 505L712 470L760 470L900 500L900 528H695Z" fill="#3b3b39" filter="url(#b2)"/>
<path d="M695 512L706 508V528H695Z" fill="#e8e8e8"/>
<ellipse cx="903" cy="388" rx="26" ry="17" fill="#24160f" opacity=".85" filter="url(#b4)"/>
<!-- wicker + armrest + sofa navy seat -->
<rect x="868" y="405" width="62" height="42" fill="#5e5a50" filter="url(#b1)"/>
<path d="M868 420H930M868 430H930M880 405V447M895 405V447M910 405V447" stroke="#8a8578" stroke-width="1.500" opacity=".6" filter="url(#b1)"/>
<path d="M872 402L934 397.500L934 406L872 411.500Z" fill="#c8682e" filter="url(#b1)"/>
<path d="M846 452L936 439L912 456L896 528H856L846 528Z" fill="#4a4e64" filter="url(#b1)"/>
<path d="M860 456L935 440L918 452L868 462Z" fill="#686c86" filter="url(#b2)"/>
<path d="M848 470L860 470L862 528H846Z" fill="#3a2018" filter="url(#b1)"/>
<path d="M866 520L894 522L893 528H866Z" fill="#e0e0e0" filter="url(#b1)"/>
<!-- white wall -->
<path d="M962 237H1214V350H962Z" fill="#f7f7f5"/>
<path d="M957 237C968 260 962 290 972 330L975 350H950V237Z" fill="#33601f" filter="url(#b2)"/>
<!-- centre + right foliage -->
<g filter="url(#b1)">
<path d="M1050 275L1062 262L1080 270L1098 262L1102 345H1048Z" fill="#3f8a26"/>
<rect x="1050" y="266" width="52" height="80" filter="url(#leaf2)" opacity=".75"/>
<path d="M1158 262L1180 256L1200 250L1214 246V340H1158Z" fill="#4c962c"/>
<rect x="1160" y="252" width="54" height="88" filter="url(#leaf2)" opacity=".7"/>
<path d="M1164 262L1196 255L1206 275L1170 290Z" fill="#5aa636"/>
<rect x="1160" y="333" width="54" height="13" fill="#10120e"/>
</g>
<!-- sofa back right + seat -->
<path d="M1176 345H1214V500H1176Z" fill="#b4b1b8" filter="url(#b1)"/>
<path d="M1120 528L1150 500L1214 496V528Z" fill="#8c8c9c" filter="url(#b1)"/>
<!-- pillow -->
<path d="M943 372L986 381L982 417L948 426L923 437L934 392Z" fill="#8fcbe8" filter="url(#b1)"/>
<path d="M940 380L980 388M936 395L981 400M932 410L981 412M928 425L960 420M950 376L938 430M965 379L958 424" stroke="#d8f0fa" stroke-width="1.200" opacity=".8" filter="url(#b1)"/>
<!-- woman 1 -->
<g filter="url(#b1)">
<path d="M998 300C996 268 1018 260 1036 266C1056 272 1060 292 1054 312C1066 322 1064 338 1058 344L1030 346L1008 338C1012 328 1000 322 998 300Z" fill="#231714"/>
<path d="M1008 296C1010 280 1024 276 1036 282C1044 292 1044 312 1034 326C1026 332 1016 330 1011 320C1006 310 1007 304 1008 296Z" fill="#c98f6e"/>
<path d="M1016 316C1022 321 1030 320 1035 314C1032 324 1022 326 1016 316Z" fill="#fff"/><path d="M1011 299L1018 297M1026 296L1034 295" stroke="#2a1a14" stroke-width="2.200"/><path d="M1012 303.500L1018 302.500M1027 301.500L1033 300.500" stroke="#3a2418" stroke-width="1.800"/><path d="M1020 310L1024 311" stroke="#a8704e" stroke-width="1.500"/>
<path d="M1018 330L1040 326L1048 346L1016 348Z" fill="#c08462"/>
<!-- sweater -->
<path d="M962 352C980 338 1000 338 1016 340L1030 350L1048 340C1066 342 1078 352 1078 372L1070 400L1056 434L1022 437L990 418L984 380L962 407L943 398Z" fill="#d0cfc9"/>
<path d="M1006 342C1000 370 992 395 990 418" stroke="#a8a59c" stroke-width="1.500" fill="none"/>
<path d="M1078 372C1074 395 1060 412 1022 424L1020 408C1040 400 1056 390 1060 370Z" fill="#cfcdc7"/>
<!-- hands -->
<path d="M906 352C906 340 918 332 928 336L940 352L952 388L944 398L926 372Z" fill="#d79c7c"/>
<path d="M948 420C960 412 985 412 1000 418L1022 410L1024 424L998 432L978 444L962 440Z" fill="#d8a080"/>
<rect x="996" y="417" width="8" height="9" rx="1.500" fill="#5a4a38"/>
</g>
<!-- tablet -->
<path d="M906 325L958 323L963 368L912 366Z" fill="#0d0d10" filter="url(#b1)"/>
<ellipse cx="918" cy="366" rx="8" ry="13" fill="#d79c7c" filter="url(#b1)"/>
<!-- red skirt -->
<g filter="url(#b1)">
<path d="M891 528L907 455L943 429L968 431L990 436L1020 443L972 452L964 528Z" fill="#b81f2a"/>
<path d="M891 528L907 455L943 429L968 431L972 452L964 528Z" fill="#b81f2a" filter="url(#skirt)"/>
</g>
<!-- legs -->
<path d="M970 452L1000 443L1033 447L1056 500L1058 528H962L960 490Z" fill="url(#leg)" filter="url(#b1)"/>
<path d="M972 500C990 478 1020 486 1034 500" stroke="#b97e62" stroke-width="2" fill="none" filter="url(#b2)"/>
<!-- woman 2 -->
<g filter="url(#b1)">
<!-- purple top -->
<path d="M1076 374C1084 366 1100 372 1112 380L1128 378L1150 336C1166 330 1184 350 1190 380L1195 412L1181 488L1164 513L1134 468L1093 449L1055 436Z" fill="url(#purp)"/>
<path d="M1120 384C1130 404 1150 422 1180 432" stroke="#2a1878" stroke-width="3" fill="none" opacity=".6"/>
<path d="M1150 400C1160 420 1176 440 1178 470" stroke="#5e3ccc" stroke-width="7" fill="none" opacity=".45"/>
<!-- hair -->
<path d="M1096 300C1090 262 1110 246 1132 250C1160 256 1170 290 1166 330C1168 352 1160 372 1142 384L1112 386L1084 380C1070 366 1074 344 1082 332C1090 322 1094 312 1096 300Z" fill="#21161a"/>
<path d="M1098 286C1098 266 1112 256 1126 260C1134 272 1136 300 1128 320C1120 332 1108 332 1102 322C1098 314 1096 306 1097 298Z" fill="#c68c6a"/>
<path d="M1100 308C1106 312 1114 310 1120 304C1118 316 1106 320 1100 308Z" fill="#fff"/><path d="M1100 281L1107 279M1115 278L1124 277" stroke="#2a1a14" stroke-width="2.200"/><path d="M1101 286L1107 285M1116 284L1123 283" stroke="#3a2418" stroke-width="1.800"/><path d="M1108 298L1112 299" stroke="#a8704e" stroke-width="1.500"/>
<path d="M1108 328L1128 322L1132 346L1116 350Z" fill="#b87e5e"/>
<path d="M1088 434L1100 427L1122 453L1110 464Z" fill="#c0203e"/>
<path d="M1078 440L1094 438L1106 452L1090 450Z" fill="#c88a6a"/>
<!-- black skirt -->
<path d="M1029 434L1056 436L1093 450L1134 468L1164 512L1154 528H1056L1056 500L1033 447Z" fill="#111016"/>
</g>
<!-- dark translucent panel -->
<path d="M728 237H891L866 528H704Z" fill="url(#pang)"/>
<!-- icons -->
<g fill="#e9e9dd" filter="url(#b1)" style="filter:blur(.5px)">
<path d="M847 339.500L865.500 357H858V381.500H836V357H828.500Z"/>
<path d="M848 433.500C828 417 831 402 840.500 404.500C844 405.500 847 408 848 411C849 408 852 405.500 855.500 404.500C865 402 868 417 848 433.500Z"/>
<circle cx="847.500" cy="471" r="13.500"/>
<path d="M837 481V494L841 490.500H854L858 494V481L852 486H843Z"/>
</g>
<g fill="#2b2b27" style="filter:blur(.5px)">
<path d="M840 462C844 460 848 463 846 467L850 470L848 476L843 479L840 474L838 468ZM851 461L857 465L858 472L853 478L851 472L854 468Z"/>
</g>
<text x="847" y="377" text-anchor="middle" font-family="Liberation Sans, sans-serif" font-size="23" fill="#2b2b27" style="filter:blur(.4px)">$</text>
</g>
</svg>
<span class="t" style="left:733px;top:251.8px;font-size:17.5px;color:#cf6312;letter-spacing:0.92px;filter:blur(0.5px);">Annual</span>
<span class="t" style="left:733px;top:270.8px;font-size:17.5px;color:#cf6312;letter-spacing:0.41px;filter:blur(0.5px);">highlights</span>
<span class="t" style="left:733px;top:343.0px;font-size:13px;color:#d4d4cc;letter-spacing:0.19px;filter:blur(0.5px);">Sales up by</span>
<span class="t" style="left:735px;top:358.0px;font-size:19.5px;color:#d4d4cc;letter-spacing:-1.34px;filter:blur(0.5px);">13%</span>
<span class="t" style="left:733px;top:400.0px;font-size:13px;color:#d4d4cc;letter-spacing:0.49px;filter:blur(0.5px);">Brand loyalty</span>
<span class="t" style="left:733px;top:416.0px;font-size:19.5px;color:#d4d4cc;letter-spacing:-0.68px;filter:blur(0.5px);">80%</span>
<span class="t" style="left:733px;top:457.0px;font-size:13px;color:#d4d4cc;letter-spacing:0.45px;filter:blur(0.5px);">Environmental</span>
<span class="t" style="left:733px;top:473.0px;font-size:13px;color:#d4d4cc;letter-spacing:1.12px;filter:blur(0.5px);">award</span>
<!-- TASK VIEW -->
<div class="a" style="left:78px;top:349px;width:24px;height:24px;background:#168a1c;filter:blur(.4px)"></div>
<svg class="a" style="left:81px;top:354px;filter:blur(.45px)" width="18" height="15" viewBox="0 0 18 15"><path d="M0 15V10L5 5.500L9 8.500L15 2L18 5V15Z" fill="#cfeccf"/><path d="M0 9L5 4L9 7L15.500 0" stroke="#fff" stroke-width="1.600" fill="none"/><path d="M12.500 0H16.500V4Z" fill="#fff"/></svg>
<span class="t" style="left:105.5px;top:353.5px;font-size:13.5px;color:#cfe2f8;letter-spacing:-0.75px;filter:blur(0.5px);">MSN Money</span>
<svg class="a" style="left:90px;top:383px;filter:blur(.6px)" width="78" height="108" viewBox="0 0 78 108"><defs><linearGradient id="mg" x1="0" y1="0" x2="0" y2="1"><stop offset="0" stop-color="#1a1a1a"/><stop offset=".12" stop-color="#3a3a38"/><stop offset=".2" stop-color="#c4c4c2"/><stop offset=".45" stop-color="#d2d2ce"/><stop offset=".6" stop-color="#7a7a78"/><stop offset=".74" stop-color="#1c1c1c"/><stop offset="1" stop-color="#080808"/></linearGradient></defs><rect width="78" height="108" fill="url(#mg)"/><rect x="0" y="0" width="78" height="3.500" fill="#e4e4e4"/><rect x="1" y="1" width="4" height="2" fill="#3a9a3a"/><rect x="0" y="3.500" width="78" height="12" fill="#1c1c1c" opacity=".75"/><path d="M0 12L14 26L20 62L14 78L0 84Z" fill="#bfa01a"/><path d="M0 30L9 36L11 66L0 72Z" fill="#dcc436" opacity=".7"/><path d="M78 18L60 36L58 60L78 66Z" fill="#c8aa1e"/><path d="M66 26L50 38L50 50L66 46Z" fill="#d8e4ee"/><rect x="23" y="40" width="10" height="20" rx="3" fill="#27407a"/><ellipse cx="28" cy="36.500" rx="3.500" ry="4" fill="#2a1c18"/><rect x="24" y="58" width="9" height="26" fill="#c0202a"/><rect x="34" y="42" width="7" height="18" rx="2" fill="#7a7a82"/><ellipse cx="37.500" cy="38.500" rx="3" ry="3.500" fill="#3a2a22"/><rect x="41" y="46" width="6" height="16" rx="2" fill="#9a6a8a"/><ellipse cx="44" cy="42.500" rx="2.800" ry="3.200" fill="#3a2a22"/><path d="M56 40C58 30 66 30 68 36L72 40L76 60L74 84H56L54 60Z" fill="#1e3a34"/><ellipse cx="62" cy="36" rx="5" ry="5.500" fill="#3a1c12"/><ellipse cx="70" cy="35" rx="4.500" ry="5" fill="#5a2a16"/><path d="M64 42L76 40L78 62L68 66Z" fill="#e8e4e0"/><rect x="66" y="56" width="9" height="13" rx="2" fill="#c05a2a"/><rect x="54" y="66" width="12" height="24" fill="#15151c"/><rect x="10" y="60" width="36" height="2" fill="#ddd" opacity=".8"/><rect x="10" y="72" width="30" height="1.500" fill="#ccc" opacity=".7"/><rect x="10" y="84" width="14" height="1.500" fill="#ccc" opacity=".7"/><rect x="10" y="96" width="12" height="3" fill="#eee" opacity=".8"/><rect x="58" y="94" width="5" height="5" fill="#4a7a1a"/><rect x="71" y="102" width="3" height="1.500" fill="#ddd"/></svg>
<div class="a" style="left:187px;top:349px;width:24px;height:24px;background:#f8d80a;filter:blur(.4px)"></div>
<svg class="a" style="left:187px;top:349px;filter:blur(.45px)" width="24" height="24" viewBox="0 0 24 24"><path d="M4 5.200L20.400 7.600L20 16.400L4.400 19.200Z" fill="#fbd40c" stroke="#e0600c" stroke-width="2" stroke-linejoin="round"/></svg>
<span class="t" style="left:214.5px;top:353.5px;font-size:13.5px;color:#cfe2f8;letter-spacing:-1.05px;filter:blur(0.5px);">Fresh Paint</span>
<svg class="a" style="left:186.5px;top:385.5px;filter:blur(.55px)" width="146" height="87" viewBox="0 0 146 87"><rect width="146" height="87" fill="#fafafa"/><rect x="1.500" y="2" width="143" height="83" fill="#f1f1ef"/><rect x="0" y="0" width="146" height="2" fill="#fff"/><rect x="0" y="0" width="3" height="3" fill="#f0c020"/><rect x="68" y="0.500" width="10" height="1.500" fill="#888"/><rect x="27" y="12" width="50" height="24" fill="#fff"/><rect x="11" y="20" width="5" height="12" fill="#e8a898"/><rect x="32" y="15" width="6" height="12" fill="#ddd"/><rect x="44" y="12.500" width="22" height="1.500" fill="#bbb"/><rect x="44" y="20" width="2.500" height="14" fill="#a8a8a8"/><rect x="49" y="19" width="2.500" height="15" fill="#d05a4a"/><rect x="54" y="20" width="2.500" height="14" fill="#50a060"/><rect x="59" y="19" width="2.500" height="15" fill="#7a7ac0"/><ellipse cx="68" cy="22" rx="3.500" ry="2.500" fill="#e03030"/><circle cx="84.0" cy="12.0" r="1.800" fill="#e8208a"/><circle cx="88.5" cy="17.7" r="1.800" fill="#8a8a8a"/><circle cx="93.1" cy="23.0" r="1.800" fill="#e03030"/><circle cx="97.6" cy="27.7" r="1.800" fill="#f08020"/><circle cx="102.2" cy="31.6" r="1.800" fill="#f0d020"/><circle cx="106.7" cy="34.4" r="1.800" fill="#40b040"/><circle cx="111.3" cy="36.0" r="1.800" fill="#20a0c0"/><circle cx="115.8" cy="36.4" r="1.800" fill="#2050c0"/><circle cx="120.4" cy="35.4" r="1.800" fill="#8040c0"/><circle cx="124.9" cy="33.3" r="1.800" fill="#c040a0"/><circle cx="129.5" cy="30.0" r="1.800" fill="#804020"/><circle cx="134.0" cy="26.0" r="1.800" fill="#202020"/><circle cx="137" cy="9" r="6" fill="#d8d6d0"/><circle cx="91" cy="11" r="3.200" fill="#9a9a9a"/><path d="M0 64C30 58 90 64 146 60V80H0Z" fill="#9ad060"/><path d="M0 72C40 66 100 72 146 68V82H0Z" fill="#7cc048"/><path d="M107 70C104 56 114 50 122 54C130 48 142 52 146 62V76H108Z" fill="#6cb43e"/><path d="M19 78L22 44L14 38L26 42L28 38L31 44L40 38L31 50L29 78Z" fill="#7a4a2a"/><path d="M4 36C10 30 40 30 46 36C44 44 36 42 30 40C22 44 8 44 4 36Z" fill="#58aa3c"/><path d="M58 46L64 46L66 60L56 60Z" fill="#e02a2a"/><circle cx="61" cy="41" r="3.500" fill="#8a8a8a"/><path d="M59 60L57 70M63 60L65 70" stroke="#555" stroke-width="1"/><path d="M44 40L50 40L49 54L45 54Z" fill="#f4f4f4" stroke="#3a5ac0" stroke-width=".8"/><path d="M42 38H52L47 34Z" fill="#e8c020"/><path d="M45 54L43 66M49 54L51 66" stroke="#3a5ac0" stroke-width="1.200"/><circle cx="76" cy="48" r="3" fill="#666"/><path d="M75 51L73 62M77 51L79 62" stroke="#3a5ac0" stroke-width="1.200"/><path d="M86 52C90 44 100 40 106 46L110 44L109 52L106 66L102 66L101 58L92 60L90 68L86 68Z" fill="#b4b4b4" stroke="#777" stroke-width=".8"/><rect x="62" y="83.500" width="22" height="2" fill="#aaa"/></svg>
<div class="a" style="left:348.5px;top:349px;width:24px;height:24px;background:#5b9b3c;filter:blur(.4px)"></div>
<svg class="a" style="left:351px;top:355px;filter:blur(.45px)" width="19" height="13" viewBox="0 0 19 13"><path d="M0 2C6 -.6 13 -.6 19 2L16.500 4H2.500Z" fill="#2a2a22"/><circle cx="5" cy="7.500" r="4.500" fill="#2a2a22"/><circle cx="14" cy="7.500" r="4.500" fill="#2a2a22"/><circle cx="5" cy="7.500" r="2.800" fill="#f4f4f0"/><circle cx="14" cy="7.500" r="2.800" fill="#f4f4f0"/><circle cx="5" cy="7.500" r="1.200" fill="#c03a2a"/><circle cx="14" cy="7.500" r="1.200" fill="#3a8a3a"/><path d="M8.500 9L9.500 11.500L10.500 9Z" fill="#f0c020"/></svg>
<span class="t" style="left:376px;top:353.5px;font-size:13.5px;color:#cfe2f8;letter-spacing:-0.84px;filter:blur(0.5px);">TripAdvisor...</span>
<svg class="a" style="left:369.5px;top:383.5px;filter:blur(.6px)" width="75" height="107.5" viewBox="0 0 75 107.5"><defs><linearGradient id="tg" x1="0" y1="0" x2="0" y2="1"><stop offset="0" stop-color="#3c5ca2"/><stop offset=".14" stop-color="#6a86bc"/><stop offset=".24" stop-color="#c4ccd8"/><stop offset=".3" stop-color="#b08a60"/><stop offset=".4" stop-color="#4a566c"/><stop offset="1" stop-color="#141c28"/></linearGradient><radialGradient id="tw" cx=".5" cy=".5" r=".5"><stop offset="0" stop-color="#dce8f4"/><stop offset=".6" stop-color="#9ab0c8"/><stop offset="1" stop-color="#4a5a74" stop-opacity="0"/></radialGradient></defs><rect width="75" height="107.500" fill="#f4f6f4"/><rect x="0" y="28" width="75" height="79.500" fill="url(#tg)"/><ellipse cx="44" cy="72" rx="28" ry="17" fill="url(#tw)"/><path d="M0 52L14 50L22 60L14 78L24 96L30 107.500H0Z" fill="#141c26"/><path d="M75 56L62 54L58 60L66 72L75 76Z" fill="#1c2634"/><path d="M14 52H62" stroke="#e8b070" stroke-width="2.500" stroke-dasharray="2 1.500" opacity=".8"/><rect x="0" y="0" width="75" height="4" fill="#e8e8e8"/><rect x="12" y="1" width="50" height="1.600" fill="#6a6a6a"/><rect x="2" y="5" width="60" height="5" fill="#fff"/><rect x="3" y="6" width="6" height="3" fill="#4a9a3a"/><rect x="64" y="5" width="9" height="22" fill="#dfe9f4"/><rect x="2" y="12" width="60" height="3" fill="#d8e8d0"/><rect x="0" y="15" width="75" height="5" fill="#dce8f2"/><rect x="3" y="22" width="68" height="6" fill="#fff"/><rect x="5" y="23.500" width="20" height="3" fill="#e4ece0"/><rect x="28" y="23.500" width="18" height="3" fill="#e4ece0"/><rect x="50" y="23" width="20" height="4.500" fill="#5aaa3e"/><rect x="22" y="97" width="22" height="2" fill="#ccc" opacity=".7"/><rect x="50" y="95" width="3" height="5" fill="#ccc" opacity=".7"/></svg>
<div class="a" style="left:181px;top:507.5px;width:176px;height:137.5px;background:#1259b2;border:1.500px solid #5f96dc;filter:blur(.4px)"></div>
<div class="a" style="left:184.5px;top:511px;width:23.5px;height:23.5px;background:#80397b;filter:blur(.4px)"></div>
<svg class="a" style="left:188px;top:515px;filter:blur(.45px)" width="17" height="15" viewBox="0 0 17 15"><rect x="9" y="1" width="7" height="13" fill="#e8d0e8"/><path d="M9 4.500H16M9 8H16M9 11.500H16" stroke="#80397b" stroke-width=".9"/><rect x="0" y="2" width="10" height="11" fill="#80397b"/><path d="M2.500 11V4L7.500 11V4" stroke="#fff" stroke-width="1.600" fill="none"/></svg>
<span class="t" style="left:211.5px;top:513.5px;font-size:13.5px;color:#cfe2f8;letter-spacing:-0.63px;filter:blur(0.5px);">Vacation</span>
<div class="a" style="left:263.5px;top:523px;width:5px;height:1px;background:#b8d0f0;"></div>
<span class="t" style="left:273px;top:513.5px;font-size:13.5px;color:#cfe2f8;letter-spacing:-1.22px;filter:blur(0.5px);">OneNote</span>
<svg class="a" style="left:183.5px;top:546px;filter:blur(.55px)" width="171" height="95" viewBox="0 0 171 95"><rect width="171" height="95" fill="#fdfdfd"/><rect x="0" y="0" width="171" height="1" fill="#c8a8d0"/><rect x="0" y="1" width="171" height="6.500" fill="#fbfafc"/><rect x="3" y="3.500" width="5" height="2" fill="#80397b"/><rect x="12" y="4" width="50" height="1.500" fill="#bbb"/><rect x="0" y="7.500" width="171" height="12" fill="#f8f8f8"/><g fill="#c4c4c8"><rect x="4" y="9" width="4" height="7"/><rect x="12" y="10" width="14" height="2"/><rect x="12" y="14" width="20" height="2"/><rect x="40" y="10" width="18" height="2"/><rect x="40" y="14" width="12" height="2"/><rect x="70" y="9" width="26" height="3"/><rect x="70" y="14" width="26" height="3"/><rect x="104" y="10" width="4" height="6"/><rect x="112" y="10" width="4" height="6"/><rect x="120" y="10" width="4" height="6"/><rect x="130" y="10" width="12" height="2"/><rect x="130" y="14" width="16" height="2"/></g><rect x="0" y="19.500" width="171" height="1" fill="#ddd"/><rect x="0" y="20.500" width="20" height="74.500" fill="#fcfcfc"/><rect x="2" y="24" width="3" height="3" fill="#f0c040"/><rect x="2" y="30" width="3" height="3" fill="#50b060"/><rect x="2" y="36" width="3" height="3" fill="#4a90d8"/><rect x="2" y="42" width="3" height="3" fill="#e06a3a"/><rect x="2" y="48" width="14" height="3" fill="#d8d8d8"/><rect x="2" y="54" width="3" height="3" fill="#f0c040"/><rect x="2" y="60" width="3" height="3" fill="#e8a020"/><rect x="7" y="24.500" width="10" height="1.500" fill="#999"/><rect x="7" y="30.500" width="8" height="1.500" fill="#999"/><rect x="7" y="36.500" width="10" height="1.500" fill="#999"/><rect x="7" y="42.500" width="7" height="1.500" fill="#999"/><rect x="22" y="21" width="20" height="4" fill="#4a90d8"/><rect x="43" y="21" width="16" height="4" fill="#e8a8c0"/><rect x="60" y="21" width="14" height="4" fill="#a8d0a0"/><rect x="34" y="31" width="24" height="2" fill="#888"/><rect x="30" y="36" width="12" height="1" fill="#aaa"/><g fill="#999"><rect x="30" y="42" width="2" height="2"/><rect x="34" y="42" width="18" height="1.500"/><rect x="30" y="46" width="2" height="2"/><rect x="34" y="46" width="14" height="1.500"/><rect x="30" y="50" width="2" height="2"/><rect x="34" y="50" width="20" height="1.500"/><rect x="30" y="54" width="2" height="2"/><rect x="34" y="54" width="12" height="1.500"/></g><circle cx="94" cy="42" r="1.500" fill="#e0a020"/><circle cx="94" cy="48" r="1.500" fill="#d84a2a"/><rect x="118" y="38" width="28" height="17" fill="#2e2a24"/><rect x="124" y="38" width="22" height="7" fill="#c8d0d8"/><rect x="126" y="45" width="20" height="6" fill="#8a6a5a"/><rect x="151" y="22" width="20" height="73" fill="#e6f0fa"/><rect x="151" y="22" width="20" height="4" fill="#c8dcf0"/><g fill="#8aa4c4"><rect x="154" y="29" width="12" height="1.200"/><rect x="154" y="33" width="8" height="1.200"/><rect x="154" y="37" width="10" height="1.200"/><rect x="154" y="41" width="7" height="1.200"/></g><rect x="34" y="62" width="16" height="1.500" fill="#666"/><g fill="#666"><rect x="30" y="68" width="1.500" height="20"/><rect x="40" y="68" width="1.500" height="20"/></g><g fill="#999"><rect x="33" y="70" width="5" height="1"/><rect x="33" y="74" width="5" height="1"/><rect x="33" y="78" width="5" height="1"/><rect x="33" y="82" width="5" height="1"/></g><path d="M76 90A11 11 0 0 1 65 90Z" fill="none"/><path d="M75 92L75 80A12 12 0 0 1 86 88Z" fill="#58b848"/><path d="M75 92L64 88A12 12 0 0 1 75 80Z" fill="#f4d020"/><path d="M75 92L64 88A12 12 0 0 0 66 95H75Z" fill="#e84a2a"/><path d="M75 92L86 88A12 12 0 0 1 85 95H75Z" fill="#3a9ad8"/><circle cx="70" cy="86" r="3" fill="#e03a2a"/></svg>
<!-- TASKBAR -->
<div class="a" style="left:0;top:663px;width:1244px;height:37px;background:#4697da"></div>
<svg class="a" style="left:10px;top:669px;filter:blur(.5px)" width="25" height="25" viewBox="0 0 25 25"><path d="M0 3.800L10.500 2.300V11.700H0ZM12 2.100L25 0V11.700H12ZM0 13.200H10.500V22.600L0 21.100ZM12 13.200H25V25L12 22.900Z" fill="#fff"/></svg>
<svg class="a" style="left:61px;top:671px;filter:blur(.5px)" width="24" height="22" viewBox="0 0 24 22"><circle cx="15" cy="8" r="5.600" fill="none" stroke="#fff" stroke-width="2.600"/><path d="M11 12.500L3 20.500" stroke="#fff" stroke-width="3.200" stroke-linecap="round"/></svg>
<svg class="a" style="left:114px;top:675px;filter:blur(.5px)" width="22" height="15" viewBox="0 0 22 15"><rect x="3.500" y="0" width="18" height="11.500" fill="#d8e8f6"/><rect x="0" y="3" width="18" height="11.500" fill="#fff"/></svg>
<svg class="a" style="left:163px;top:664px;filter:blur(.6px)" width="32" height="32" viewBox="0 0 32 32"><text x="3.500" y="29.500" font-family="Liberation Sans, sans-serif" font-size="43" font-weight="700" font-style="italic" fill="#6fcbf6" textLength="25" lengthAdjust="spacingAndGlyphs">e</text></svg>
<svg class="a" style="left:163px;top:666px;filter:blur(.5px)" width="32" height="28" viewBox="0 0 32 28"><path d="M3 26C-3 18 12 2 26 1C31 1 31 5 29 8" stroke="#f0cc50" stroke-width="2.200" fill="none"/></svg>
<svg class="a" style="left:222px;top:671px;filter:blur(.5px)" width="28" height="23" viewBox="0 0 28 23"><path d="M0 4H14L17 0H28V23H0Z" fill="#f2c67c"/><rect x="14" y="3" width="13" height="5" fill="#fbe3b0"/><path d="M0 10H28V23H0Z" fill="#3b7cc8"/><rect x="9" y="15" width="10" height="8" fill="#f2c67c"/><rect x="11" y="17" width="6" height="3" fill="#3b7cc8"/></svg>
<div class="a" style="left:278px;top:668px;width:28px;height:27px;background:#0d8a18;filter:blur(.5px)"></div>
<svg class="a" style="left:283px;top:670px;filter:blur(.5px)" width="18" height="22" viewBox="0 0 18 22"><path d="M5 7C5 -1 13 -1 13 7" stroke="#fff" stroke-width="1.600" fill="none"/><path d="M0 7H18L16.500 21H1.500Z" fill="#fff"/><path d="M5 11.500L8.500 11V14H5ZM9.500 10.800L13 10.300V14H9.500ZM5 15H8.500V18L5 17.500ZM9.500 15H13V18.700L9.500 18.200Z" fill="#0d8a18"/></svg>
<div class="a" style="left:321.5px;top:663px;width:336.5px;height:37px;background:#62a8e3;"></div>
<div class="a" style="left:377.0px;top:663px;width:1.5px;height:37px;background:#4a94d8;filter:blur(.4px)"></div>
<div class="a" style="left:433.5px;top:663px;width:1.5px;height:37px;background:#4a94d8;filter:blur(.4px)"></div>
<div class="a" style="left:489.5px;top:663px;width:1.5px;height:37px;background:#4a94d8;filter:blur(.4px)"></div>
<div class="a" style="left:546.0px;top:663px;width:1.5px;height:37px;background:#4a94d8;filter:blur(.4px)"></div>
<div class="a" style="left:602.0px;top:663px;width:1.5px;height:37px;background:#4a94d8;filter:blur(.4px)"></div>
<div class="a" style="left:321px;top:663px;width:1px;height:37px;background:#4a94d8;"></div>
<div class="a" style="left:657.5px;top:663px;width:1px;height:37px;background:#4a94d8;"></div>
<div class="a" style="left:335.5px;top:668px;width:27.5px;height:27.5px;background:#0d8a18;filter:blur(.5px)"></div>
<svg class="a" style="left:339px;top:673px;filter:blur(.5px)" width="21" height="18" viewBox="0 0 21 18"><path d="M0 18V12L6 6.500L10.500 10L17.500 2.500L21 6V18Z" fill="#bfe6c2"/><path d="M0 11L6 5L10.500 8.500L18 0.500" stroke="#fff" stroke-width="1.800" fill="none"/><path d="M14.500 0H19.500V5Z" fill="#fff"/></svg>
<svg class="a" style="left:390.5px;top:668px;filter:blur(.5px)" width="27" height="27" viewBox="0 0 27 27"><path d="M0 3L16 0V27L0 24Z" fill="#e8501e"/><rect x="16" y="3.500" width="10" height="20" fill="#fbe9e2" stroke="#e8501e" stroke-width="1.200"/><path d="M18 8H24M18 12H24M18 16H24" stroke="#f0a080" stroke-width="1.400"/><path d="M5 20V7.500H9C13.500 7.500 13.500 14 9 14H5" stroke="#fff" stroke-width="2.200" fill="none"/></svg>
<div class="a" style="left:449.5px;top:668px;width:26.5px;height:26.5px;background:#5b9b3c;filter:blur(.5px)"></div>
<svg class="a" style="left:452px;top:675px;filter:blur(.5px)" width="21" height="14" viewBox="0 0 21 14"><path d="M0 2.200C6.500 -.7 14.500 -.7 21 2.200L18 4.500H3Z" fill="#2a2a22"/><circle cx="5.500" cy="8.500" r="5" fill="#2a2a22"/><circle cx="15.500" cy="8.500" r="5" fill="#2a2a22"/><circle cx="5.500" cy="8.500" r="3.100" fill="#f4f4f0"/><circle cx="15.500" cy="8.500" r="3.100" fill="#f4f4f0"/><circle cx="5.500" cy="8.500" r="1.400" fill="#c03a2a"/><circle cx="15.500" cy="8.500" r="1.400" fill="#3a8a3a"/></svg>
<svg class="a" style="left:504.5px;top:668px;filter:blur(.5px)" width="28" height="27" viewBox="0 0 28 27"><path d="M0 3L17 0V27L0 24Z" fill="#80397b"/><rect x="17" y="3.500" width="10" height="20" fill="#f0e0f0" stroke="#80397b" stroke-width="1.200"/><path d="M21 3.500V23.500M17 9H27M17 14H27M17 19H27" stroke="#a060a0" stroke-width="1.200"/><path d="M4.500 19.500V7.500L12 19.500V7.500" stroke="#fff" stroke-width="2.300" fill="none"/></svg>
<svg class="a" style="left:561px;top:668px;filter:blur(.5px)" width="28" height="27" viewBox="0 0 28 27"><path d="M0 3L17 0V27L0 24Z" fill="#1e7a46"/><rect x="17" y="3.500" width="10" height="20" fill="#e0f0e6" stroke="#1e7a46" stroke-width="1.200"/><path d="M22 3.500V23.500M17 8.500H27M17 13.500H27M17 18.500H27" stroke="#3a9a66" stroke-width="1.300"/><path d="M4 7.500L12.500 19.500M12.500 7.500L4 19.500" stroke="#fff" stroke-width="2.300"/></svg>
<div class="a" style="left:617.5px;top:668px;width:27.5px;height:27px;background:#f8d80a;filter:blur(.5px)"></div>
<svg class="a" style="left:617.5px;top:668px;filter:blur(.5px)" width="27.5" height="27" viewBox="0 0 27.5 27"><path d="M4.500 6L23.500 8.700L23 18.800L5 22Z" fill="#fbd40c" stroke="#e0600c" stroke-width="2.300" stroke-linejoin="round"/></svg>
<svg class="a" style="left:1013.5px;top:673px;filter:blur(.5px)" width="29.5" height="17.5" viewBox="0 0 29.5 17.5"><rect x="1" y="1" width="27.500" height="15.500" rx="2.500" fill="#9cc8ee" stroke="#fff" stroke-width="1.600"/><path d="M4 5H25.500M4 8.500H25.500" stroke="#e8f2fb" stroke-width="1.800" stroke-dasharray="2 1"/><path d="M7 12.500H22.500" stroke="#fff" stroke-width="1.800"/></svg>
<svg class="a" style="left:1060px;top:681.5px;filter:blur(.5px)" width="9" height="5" viewBox="0 0 9 5"><path d="M0 5L4.500 0L9 5Z" fill="#fff"/></svg>
<svg class="a" style="left:1088px;top:677px;filter:blur(.5px)" width="14" height="13" viewBox="0 0 16 15"><path d="M1.500 0V15" stroke="#e8f2fb" stroke-width="1.800"/><path d="M2.500 1C6 -.5 9 3 15 1V8C9 10 6 6.500 2.500 8Z" fill="#f4f8fc"/></svg>
<svg class="a" style="left:1119px;top:677px;filter:blur(.5px)" width="15" height="11" viewBox="0 0 15 11"><path d="M0 11L15 0V11Z" fill="#a8cef0"/><path d="M0 11L7 6V11Z" fill="#eef5fb"/></svg>
<svg class="a" style="left:1148px;top:676.5px;filter:blur(.5px)" width="14" height="13" viewBox="0 0 16 15"><path d="M0 5H3.500L8 .5V14.500L3.500 10H0Z" fill="#f0f6fc"/><path d="M10.500 4C12.500 6 12.500 9 10.500 11M12.500 1.500C16 5 16 10 12.500 13.500" stroke="#b8d6f0" stroke-width="1.400" fill="none"/></svg>
<span class="t" style="left:1182.5px;top:669.3px;font-size:10.5px;color:#d4e8fa;letter-spacing:0.08px;filter:blur(0.5px);">10:24 AM</span>
<span class="t" style="left:1180px;top:684.3px;font-size:10.5px;color:#d4e8fa;letter-spacing:0.20px;filter:blur(0.5px);">9/30/2014</span>
</div>
</body>
</html>
